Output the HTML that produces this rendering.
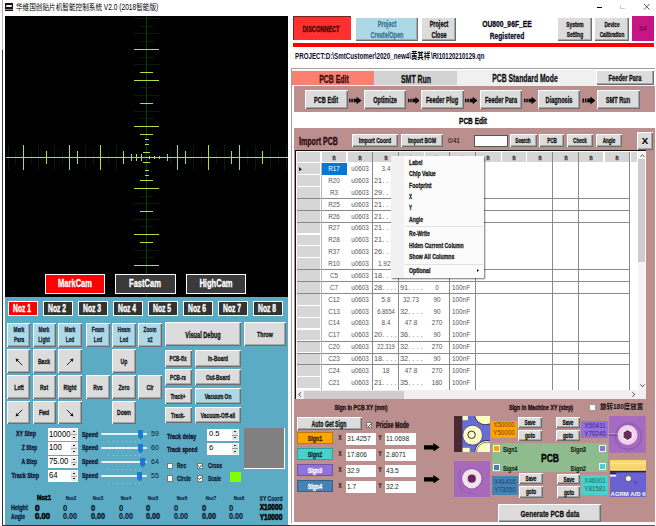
<!DOCTYPE html><html><head><meta charset="utf-8"><title>SMT</title><style>html,body{margin:0;padding:0}body{width:656px;height:526px;position:relative;overflow:hidden;background:#fff;font-family:"Liberation Sans",sans-serif}
.a{position:absolute;display:block}
.t{position:absolute;white-space:nowrap;line-height:1;display:block}
.b3{box-shadow:inset 1px 1px 0 #fff,inset -1px -1px 0 #6e6e6e,inset -2px -2px 0 #a8a8a8}
</style></head><body><div class="a " style="left:2.0px;top:0.0px;width:1.0px;height:50.0px;background:#b4b4bc;"></div>
<div class="a " style="left:2.0px;top:50.0px;width:1.0px;height:476.0px;background:#2c3444;"></div>
<div class="a " style="left:5.0px;top:3.0px;width:8.0px;height:8.0px;background:#111;"></div>
<div class="a " style="left:6.0px;top:5.0px;width:6.0px;height:2.0px;background:#eee;border-radius:2px"></div>
<div class="a " style="left:5.0px;top:9.0px;width:8.0px;height:1.0px;background:linear-gradient(90deg,#888 50%,#c87533 50%);"></div>
<span class="t" style="left:15.5px;top:7.6px;font-size:8.2px;font-weight:400;color:#000;transform:translate(0,-50%) scaleX(0.808);transform-origin:left center;font-family:'Liberation Sans','Noto Sans CJK SC',sans-serif;">华维国创贴片机智能控制系统 V2.0 (2018智能版)</span>
<div class="a " style="left:597.0px;top:7.0px;width:5.0px;height:1.3px;background:#000;"></div>
<div class="a " style="left:620.0px;top:4.5px;width:0.8px;height:4.5px;background:#ccc;"></div>
<div class="a " style="left:620.0px;top:8.4px;width:5.0px;height:0.8px;background:#ccc;"></div>
<svg class="a" style="left:643px;top:3px" width="8" height="8" viewBox="0 0 8 8"><path d="M1 1L6.5 6.5M6.5 1L1 6.5" stroke="#333" stroke-width="0.8" fill="none"/></svg>
<div class="a " style="left:5.0px;top:16.0px;width:282.5px;height:281.0px;background:#000;"></div>
<div class="a " style="left:146.0px;top:16.0px;width:1.0px;height:281.0px;background:#0a400a;"></div>
<div class="a " style="left:134.3px;top:17.9px;width:24.4px;height:1.0px;background:#061e06;"></div>
<div class="a " style="left:140.3px;top:25.7px;width:12.4px;height:1.0px;background:#061e06;"></div>
<div class="a " style="left:134.3px;top:33.4px;width:24.4px;height:1.0px;background:#061e06;"></div>
<div class="a " style="left:140.3px;top:41.1px;width:12.4px;height:1.0px;background:#061e06;"></div>
<div class="a " style="left:134.3px;top:48.8px;width:24.4px;height:1.1px;background:#b0e040;"></div>
<div class="a " style="left:140.3px;top:56.5px;width:12.4px;height:1.0px;background:#061e06;"></div>
<div class="a " style="left:134.3px;top:64.3px;width:24.4px;height:1.0px;background:#061e06;"></div>
<div class="a " style="left:140.3px;top:71.9px;width:12.4px;height:1.1px;background:#b0e040;"></div>
<div class="a " style="left:134.3px;top:79.7px;width:24.4px;height:1.1px;background:#b0e040;"></div>
<div class="a " style="left:140.3px;top:87.4px;width:12.4px;height:1.0px;background:#061e06;"></div>
<div class="a " style="left:134.3px;top:95.1px;width:24.4px;height:1.0px;background:#061e06;"></div>
<div class="a " style="left:140.3px;top:102.8px;width:12.4px;height:1.1px;background:#b0e040;"></div>
<div class="a " style="left:134.3px;top:110.6px;width:24.4px;height:1.0px;background:#061e06;"></div>
<div class="a " style="left:140.3px;top:118.3px;width:12.4px;height:1.0px;background:#061e06;"></div>
<div class="a " style="left:134.3px;top:126.0px;width:24.4px;height:1.1px;background:#b0e040;"></div>
<div class="a " style="left:140.3px;top:133.7px;width:12.4px;height:1.1px;background:#b0e040;"></div>
<div class="a " style="left:140.3px;top:180.0px;width:12.4px;height:1.1px;background:#b0e040;"></div>
<div class="a " style="left:134.3px;top:187.7px;width:24.4px;height:1.1px;background:#b0e040;"></div>
<div class="a " style="left:140.3px;top:195.5px;width:12.4px;height:1.0px;background:#061e06;"></div>
<div class="a " style="left:134.3px;top:203.2px;width:24.4px;height:1.0px;background:#061e06;"></div>
<div class="a " style="left:140.3px;top:210.9px;width:12.4px;height:1.1px;background:#b0e040;"></div>
<div class="a " style="left:134.3px;top:218.7px;width:24.4px;height:1.0px;background:#061e06;"></div>
<div class="a " style="left:140.3px;top:226.4px;width:12.4px;height:1.0px;background:#061e06;"></div>
<div class="a " style="left:134.3px;top:234.1px;width:24.4px;height:1.1px;background:#b0e040;"></div>
<div class="a " style="left:140.3px;top:241.8px;width:12.4px;height:1.1px;background:#b0e040;"></div>
<div class="a " style="left:134.3px;top:249.5px;width:24.4px;height:1.0px;background:#061e06;"></div>
<div class="a " style="left:140.3px;top:257.3px;width:12.4px;height:1.0px;background:#061e06;"></div>
<div class="a " style="left:134.3px;top:264.9px;width:24.4px;height:1.1px;background:#b0e040;"></div>
<div class="a " style="left:143.3px;top:151.8px;width:6.4px;height:1.1px;background:#b0e040;"></div>
<div class="a " style="left:143.3px;top:161.8px;width:6.4px;height:1.1px;background:#b0e040;"></div>
<div class="a " style="left:144.5px;top:143.8px;width:4.0px;height:1.1px;background:#b0e040;"></div>
<div class="a " style="left:144.5px;top:169.8px;width:4.0px;height:1.1px;background:#b0e040;"></div>
<div class="a " style="left:144.5px;top:138.8px;width:4.0px;height:1.1px;background:#b0e040;"></div>
<div class="a " style="left:144.5px;top:174.8px;width:4.0px;height:1.1px;background:#b0e040;"></div>
<div class="a " style="left:7.5px;top:144.9px;width:1.0px;height:25.0px;background:#061e06;"></div>
<div class="a " style="left:15.3px;top:150.9px;width:1.0px;height:13.0px;background:#061e06;"></div>
<div class="a " style="left:22.9px;top:144.9px;width:1.1px;height:25.0px;background:#b0e040;"></div>
<div class="a " style="left:30.7px;top:150.9px;width:1.0px;height:13.0px;background:#061e06;"></div>
<div class="a " style="left:38.4px;top:144.9px;width:1.0px;height:25.0px;background:#061e06;"></div>
<div class="a " style="left:46.1px;top:150.9px;width:1.1px;height:13.0px;background:#b0e040;"></div>
<div class="a " style="left:53.9px;top:144.9px;width:1.0px;height:25.0px;background:#061e06;"></div>
<div class="a " style="left:61.6px;top:150.9px;width:1.0px;height:13.0px;background:#061e06;"></div>
<div class="a " style="left:69.2px;top:144.9px;width:1.1px;height:25.0px;background:#b0e040;"></div>
<div class="a " style="left:77.0px;top:150.9px;width:1.1px;height:13.0px;background:#b0e040;"></div>
<div class="a " style="left:84.7px;top:144.9px;width:1.0px;height:25.0px;background:#061e06;"></div>
<div class="a " style="left:92.5px;top:150.9px;width:1.0px;height:13.0px;background:#061e06;"></div>
<div class="a " style="left:100.1px;top:144.9px;width:1.1px;height:25.0px;background:#b0e040;"></div>
<div class="a " style="left:107.9px;top:150.9px;width:1.0px;height:13.0px;background:#061e06;"></div>
<div class="a " style="left:115.6px;top:144.9px;width:1.0px;height:25.0px;background:#061e06;"></div>
<div class="a " style="left:123.3px;top:150.9px;width:1.1px;height:13.0px;background:#b0e040;"></div>
<div class="a " style="left:169.7px;top:150.9px;width:1.0px;height:13.0px;background:#061e06;"></div>
<div class="a " style="left:177.3px;top:144.9px;width:1.1px;height:25.0px;background:#b0e040;"></div>
<div class="a " style="left:185.0px;top:150.9px;width:1.1px;height:13.0px;background:#b0e040;"></div>
<div class="a " style="left:192.8px;top:144.9px;width:1.0px;height:25.0px;background:#061e06;"></div>
<div class="a " style="left:200.5px;top:150.9px;width:1.0px;height:13.0px;background:#061e06;"></div>
<div class="a " style="left:208.2px;top:144.9px;width:1.1px;height:25.0px;background:#b0e040;"></div>
<div class="a " style="left:216.0px;top:150.9px;width:1.0px;height:13.0px;background:#061e06;"></div>
<div class="a " style="left:223.7px;top:144.9px;width:1.0px;height:25.0px;background:#061e06;"></div>
<div class="a " style="left:231.4px;top:150.9px;width:1.1px;height:13.0px;background:#b0e040;"></div>
<div class="a " style="left:239.1px;top:144.9px;width:1.1px;height:25.0px;background:#b0e040;"></div>
<div class="a " style="left:246.9px;top:150.9px;width:1.0px;height:13.0px;background:#061e06;"></div>
<div class="a " style="left:254.6px;top:144.9px;width:1.0px;height:25.0px;background:#061e06;"></div>
<div class="a " style="left:262.2px;top:150.9px;width:1.1px;height:13.0px;background:#b0e040;"></div>
<div class="a " style="left:270.0px;top:144.9px;width:1.0px;height:25.0px;background:#061e06;"></div>
<div class="a " style="left:277.7px;top:150.9px;width:1.0px;height:13.0px;background:#061e06;"></div>
<div class="a " style="left:285.5px;top:144.9px;width:1.0px;height:25.0px;background:#061e06;"></div>
<div class="a " style="left:6.0px;top:156.8px;width:281.5px;height:1.2px;background:#b0e040;"></div>
<div class="a " style="left:140.9px;top:153.9px;width:1.1px;height:7.0px;background:#b0e040;"></div>
<div class="a " style="left:135.8px;top:154.2px;width:1.1px;height:6.4px;background:#b0e040;"></div>
<div class="a " style="left:130.6px;top:154.2px;width:1.1px;height:6.4px;background:#b0e040;"></div>
<div class="a " style="left:148.9px;top:155.8px;width:1.1px;height:3.2px;background:#b0e040;"></div>
<div class="a " style="left:153.8px;top:155.8px;width:1.1px;height:3.2px;background:#b0e040;"></div>
<div class="a " style="left:158.9px;top:155.8px;width:1.1px;height:3.2px;background:#b0e040;"></div>
<div class="a " style="left:166.9px;top:153.9px;width:1.1px;height:7.0px;background:#b0e040;"></div>
<div class="a " style="left:44.5px;top:273.5px;width:60.5px;height:20.0px;background:#ff0000;border:1px solid #fff;box-sizing:border-box"></div>
<span class="t" style="left:74.8px;top:283.3px;font-size:10.5px;font-weight:700;color:#fff;transform:translate(-50%,-50%) scaleX(0.720);transform-origin:center;-webkit-text-stroke:0.3px;">MarkCam</span>
<div class="a " style="left:115.0px;top:273.5px;width:60.5px;height:20.0px;background:#3a3a3a;border:1px solid #fff;box-sizing:border-box"></div>
<span class="t" style="left:145.2px;top:283.3px;font-size:10.5px;font-weight:700;color:#fff;transform:translate(-50%,-50%) scaleX(0.720);transform-origin:center;-webkit-text-stroke:0.3px;">FastCam</span>
<div class="a " style="left:185.5px;top:273.5px;width:60.5px;height:20.0px;background:#3a3a3a;border:1px solid #fff;box-sizing:border-box"></div>
<span class="t" style="left:215.8px;top:283.3px;font-size:10.5px;font-weight:700;color:#fff;transform:translate(-50%,-50%) scaleX(0.720);transform-origin:center;-webkit-text-stroke:0.3px;">HighCam</span>
<div class="a " style="left:5.0px;top:297.0px;width:282.5px;height:227.6px;background:#5aabc3;"></div>
<div class="a " style="left:2.0px;top:525.0px;width:288.0px;height:1.0px;background:#2a2c3c;"></div>
<div class="a " style="left:290.0px;top:525.0px;width:365.0px;height:1.0px;background:#555;"></div>
<div class="a " style="left:8.0px;top:300.8px;width:30.3px;height:15.5px;background:#ff0000;border:1px solid #fff;box-sizing:border-box"></div>
<span class="t" style="left:22.4px;top:308.6px;font-size:10.2px;font-weight:700;color:#fff;transform:translate(-50%,-50%) scaleX(0.662);transform-origin:center;-webkit-text-stroke:0.4px;">Noz 1</span>
<div class="a " style="left:43.0px;top:300.8px;width:30.3px;height:15.5px;background:#333;border:1px solid #fff;box-sizing:border-box"></div>
<span class="t" style="left:57.4px;top:308.6px;font-size:10.2px;font-weight:700;color:#fff;transform:translate(-50%,-50%) scaleX(0.662);transform-origin:center;-webkit-text-stroke:0.4px;">Noz 2</span>
<div class="a " style="left:78.0px;top:300.8px;width:30.3px;height:15.5px;background:#333;border:1px solid #fff;box-sizing:border-box"></div>
<span class="t" style="left:92.4px;top:308.6px;font-size:10.2px;font-weight:700;color:#fff;transform:translate(-50%,-50%) scaleX(0.662);transform-origin:center;-webkit-text-stroke:0.4px;">Noz 3</span>
<div class="a " style="left:113.0px;top:300.8px;width:30.3px;height:15.5px;background:#333;border:1px solid #fff;box-sizing:border-box"></div>
<span class="t" style="left:127.4px;top:308.6px;font-size:10.2px;font-weight:700;color:#fff;transform:translate(-50%,-50%) scaleX(0.662);transform-origin:center;-webkit-text-stroke:0.4px;">Noz 4</span>
<div class="a " style="left:148.0px;top:300.8px;width:30.3px;height:15.5px;background:#333;border:1px solid #fff;box-sizing:border-box"></div>
<span class="t" style="left:162.4px;top:308.6px;font-size:10.2px;font-weight:700;color:#fff;transform:translate(-50%,-50%) scaleX(0.662);transform-origin:center;-webkit-text-stroke:0.4px;">Noz 5</span>
<div class="a " style="left:183.0px;top:300.8px;width:30.3px;height:15.5px;background:#333;border:1px solid #fff;box-sizing:border-box"></div>
<span class="t" style="left:197.4px;top:308.6px;font-size:10.2px;font-weight:700;color:#fff;transform:translate(-50%,-50%) scaleX(0.662);transform-origin:center;-webkit-text-stroke:0.4px;">Noz 6</span>
<div class="a " style="left:218.0px;top:300.8px;width:30.3px;height:15.5px;background:#333;border:1px solid #fff;box-sizing:border-box"></div>
<span class="t" style="left:232.4px;top:308.6px;font-size:10.2px;font-weight:700;color:#fff;transform:translate(-50%,-50%) scaleX(0.662);transform-origin:center;-webkit-text-stroke:0.4px;">Noz 7</span>
<div class="a " style="left:253.0px;top:300.8px;width:30.3px;height:15.5px;background:#333;border:1px solid #fff;box-sizing:border-box"></div>
<span class="t" style="left:267.4px;top:308.6px;font-size:10.2px;font-weight:700;color:#fff;transform:translate(-50%,-50%) scaleX(0.662);transform-origin:center;-webkit-text-stroke:0.4px;">Noz 8</span>
<div class="a b3" style="left:7.0px;top:322.6px;width:23.2px;height:24.1px;background:#add8e6;"></div>
<span class="t" style="left:18.6px;top:330.1px;font-size:7.6px;font-weight:700;color:#123;transform:translate(-50%,-50%) scaleX(0.620);transform-origin:center;-webkit-text-stroke:0.3px;">Mark</span>
<span class="t" style="left:18.6px;top:340.1px;font-size:7.6px;font-weight:700;color:#123;transform:translate(-50%,-50%) scaleX(0.620);transform-origin:center;-webkit-text-stroke:0.3px;">Para</span>
<div class="a b3" style="left:32.7px;top:322.6px;width:23.1px;height:24.1px;background:#add8e6;"></div>
<span class="t" style="left:44.2px;top:330.1px;font-size:7.6px;font-weight:700;color:#123;transform:translate(-50%,-50%) scaleX(0.620);transform-origin:center;-webkit-text-stroke:0.3px;">Mark</span>
<span class="t" style="left:44.2px;top:340.1px;font-size:7.6px;font-weight:700;color:#123;transform:translate(-50%,-50%) scaleX(0.620);transform-origin:center;-webkit-text-stroke:0.3px;">Light</span>
<div class="a b3" style="left:58.3px;top:322.6px;width:23.4px;height:24.1px;background:#add8e6;"></div>
<span class="t" style="left:70.0px;top:330.1px;font-size:7.6px;font-weight:700;color:#123;transform:translate(-50%,-50%) scaleX(0.620);transform-origin:center;-webkit-text-stroke:0.3px;">Mark</span>
<span class="t" style="left:70.0px;top:340.1px;font-size:7.6px;font-weight:700;color:#123;transform:translate(-50%,-50%) scaleX(0.620);transform-origin:center;-webkit-text-stroke:0.3px;">Led</span>
<div class="a b3" style="left:85.7px;top:322.6px;width:24.0px;height:24.1px;background:#add8e6;"></div>
<span class="t" style="left:97.7px;top:330.1px;font-size:7.6px;font-weight:700;color:#123;transform:translate(-50%,-50%) scaleX(0.620);transform-origin:center;-webkit-text-stroke:0.3px;">Feam</span>
<span class="t" style="left:97.7px;top:340.1px;font-size:7.6px;font-weight:700;color:#123;transform:translate(-50%,-50%) scaleX(0.620);transform-origin:center;-webkit-text-stroke:0.3px;">Led</span>
<div class="a b3" style="left:112.4px;top:322.6px;width:23.4px;height:24.1px;background:#add8e6;"></div>
<span class="t" style="left:124.1px;top:330.1px;font-size:7.6px;font-weight:700;color:#123;transform:translate(-50%,-50%) scaleX(0.620);transform-origin:center;-webkit-text-stroke:0.3px;">Heam</span>
<span class="t" style="left:124.1px;top:340.1px;font-size:7.6px;font-weight:700;color:#123;transform:translate(-50%,-50%) scaleX(0.620);transform-origin:center;-webkit-text-stroke:0.3px;">Led</span>
<div class="a b3" style="left:138.4px;top:322.6px;width:23.2px;height:24.1px;background:#add8e6;"></div>
<span class="t" style="left:150.0px;top:330.1px;font-size:7.6px;font-weight:700;color:#123;transform:translate(-50%,-50%) scaleX(0.620);transform-origin:center;-webkit-text-stroke:0.3px;">Zoom</span>
<span class="t" style="left:150.0px;top:340.1px;font-size:7.6px;font-weight:700;color:#123;transform:translate(-50%,-50%) scaleX(0.620);transform-origin:center;-webkit-text-stroke:0.3px;">x2</span>
<div class="a b3" style="left:164.7px;top:322.4px;width:76.6px;height:23.9px;background:#dcdcdc;"></div>
<span class="t" style="left:203.0px;top:334.9px;font-size:8.5px;font-weight:700;color:#111;transform:translate(-50%,-50%) scaleX(0.660);transform-origin:center;-webkit-text-stroke:0.3px;">Visual Debug</span>
<div class="a b3" style="left:244.2px;top:322.4px;width:42.2px;height:23.9px;background:#dcdcdc;"></div>
<span class="t" style="left:265.3px;top:334.9px;font-size:8px;font-weight:700;color:#111;transform:translate(-50%,-50%) scaleX(0.660);transform-origin:center;-webkit-text-stroke:0.3px;">Throw</span>
<div class="a b3" style="left:7.0px;top:349.4px;width:23.2px;height:23.4px;background:#dcdcdc;"></div>
<svg class="a" style="left:14.6px;top:357.7px" width="8" height="8" viewBox="0 0 8 8"><g transform="rotate(0 4 4)"><path d="M7.2 7.2L1.6 1.6" stroke="#111" stroke-width="0.9" fill="none"/><path d="M0.6 0.6L4 1.4L1.4 4Z" fill="#111"/></g></svg>
<div class="a b3" style="left:32.7px;top:349.4px;width:23.1px;height:23.4px;background:#dcdcdc;"></div>
<span class="t" style="left:44.2px;top:361.6px;font-size:8px;font-weight:700;color:#111;transform:translate(-50%,-50%) scaleX(0.640);transform-origin:center;-webkit-text-stroke:0.3px;">Back</span>
<div class="a b3" style="left:58.3px;top:349.4px;width:23.4px;height:23.4px;background:#dcdcdc;"></div>
<svg class="a" style="left:66.0px;top:357.7px" width="8" height="8" viewBox="0 0 8 8"><g transform="rotate(90 4 4)"><path d="M7.2 7.2L1.6 1.6" stroke="#111" stroke-width="0.9" fill="none"/><path d="M0.6 0.6L4 1.4L1.4 4Z" fill="#111"/></g></svg>
<div class="a b3" style="left:112.4px;top:349.4px;width:23.4px;height:23.4px;background:#dcdcdc;"></div>
<span class="t" style="left:124.1px;top:361.6px;font-size:8px;font-weight:700;color:#111;transform:translate(-50%,-50%) scaleX(0.640);transform-origin:center;-webkit-text-stroke:0.3px;">Up</span>
<div class="a b3" style="left:7.0px;top:375.2px;width:23.2px;height:23.6px;background:#dcdcdc;"></div>
<span class="t" style="left:18.6px;top:387.5px;font-size:8px;font-weight:700;color:#111;transform:translate(-50%,-50%) scaleX(0.640);transform-origin:center;-webkit-text-stroke:0.3px;">Left</span>
<div class="a b3" style="left:32.7px;top:375.2px;width:23.1px;height:23.6px;background:#dcdcdc;"></div>
<span class="t" style="left:44.2px;top:387.5px;font-size:8px;font-weight:700;color:#111;transform:translate(-50%,-50%) scaleX(0.640);transform-origin:center;-webkit-text-stroke:0.3px;">Rst</span>
<div class="a b3" style="left:58.3px;top:375.2px;width:23.4px;height:23.6px;background:#dcdcdc;"></div>
<span class="t" style="left:70.0px;top:387.5px;font-size:8px;font-weight:700;color:#111;transform:translate(-50%,-50%) scaleX(0.640);transform-origin:center;-webkit-text-stroke:0.3px;">Right</span>
<div class="a b3" style="left:85.7px;top:375.2px;width:24.0px;height:23.6px;background:#dcdcdc;"></div>
<span class="t" style="left:97.7px;top:387.5px;font-size:8px;font-weight:700;color:#111;transform:translate(-50%,-50%) scaleX(0.640);transform-origin:center;-webkit-text-stroke:0.3px;">Rvs</span>
<div class="a b3" style="left:112.4px;top:375.2px;width:23.4px;height:23.6px;background:#dcdcdc;"></div>
<span class="t" style="left:124.1px;top:387.5px;font-size:8px;font-weight:700;color:#111;transform:translate(-50%,-50%) scaleX(0.640);transform-origin:center;-webkit-text-stroke:0.3px;">Zero</span>
<div class="a b3" style="left:138.4px;top:375.2px;width:23.2px;height:23.6px;background:#dcdcdc;"></div>
<span class="t" style="left:150.0px;top:387.5px;font-size:8px;font-weight:700;color:#111;transform:translate(-50%,-50%) scaleX(0.640);transform-origin:center;-webkit-text-stroke:0.3px;">Clr</span>
<div class="a b3" style="left:7.0px;top:401.3px;width:23.2px;height:23.0px;background:#dcdcdc;"></div>
<svg class="a" style="left:14.6px;top:409.4px" width="8" height="8" viewBox="0 0 8 8"><g transform="rotate(270 4 4)"><path d="M7.2 7.2L1.6 1.6" stroke="#111" stroke-width="0.9" fill="none"/><path d="M0.6 0.6L4 1.4L1.4 4Z" fill="#111"/></g></svg>
<div class="a b3" style="left:32.7px;top:401.3px;width:23.1px;height:23.0px;background:#dcdcdc;"></div>
<span class="t" style="left:44.2px;top:413.3px;font-size:8px;font-weight:700;color:#111;transform:translate(-50%,-50%) scaleX(0.640);transform-origin:center;-webkit-text-stroke:0.3px;">Fwd</span>
<div class="a b3" style="left:58.3px;top:401.3px;width:23.4px;height:23.0px;background:#dcdcdc;"></div>
<svg class="a" style="left:66.0px;top:409.4px" width="8" height="8" viewBox="0 0 8 8"><g transform="rotate(180 4 4)"><path d="M7.2 7.2L1.6 1.6" stroke="#111" stroke-width="0.9" fill="none"/><path d="M0.6 0.6L4 1.4L1.4 4Z" fill="#111"/></g></svg>
<div class="a b3" style="left:112.4px;top:401.3px;width:23.4px;height:23.0px;background:#dcdcdc;"></div>
<span class="t" style="left:124.1px;top:413.3px;font-size:8px;font-weight:700;color:#111;transform:translate(-50%,-50%) scaleX(0.640);transform-origin:center;-webkit-text-stroke:0.3px;">Down</span>
<div class="a b3" style="left:164.7px;top:350.0px;width:27.2px;height:16.5px;background:#dcdcdc;"></div>
<span class="t" style="left:178.3px;top:358.8px;font-size:7.6px;font-weight:700;color:#111;transform:translate(-50%,-50%) scaleX(0.620);transform-origin:center;-webkit-text-stroke:0.3px;">PCB-fix</span>
<div class="a b3" style="left:194.7px;top:350.0px;width:46.6px;height:16.5px;background:#dcdcdc;"></div>
<span class="t" style="left:218.0px;top:358.8px;font-size:7.6px;font-weight:700;color:#111;transform:translate(-50%,-50%) scaleX(0.640);transform-origin:center;-webkit-text-stroke:0.3px;">In-Board</span>
<div class="a b3" style="left:164.7px;top:369.4px;width:27.2px;height:16.1px;background:#dcdcdc;"></div>
<span class="t" style="left:178.3px;top:377.9px;font-size:7.6px;font-weight:700;color:#111;transform:translate(-50%,-50%) scaleX(0.620);transform-origin:center;-webkit-text-stroke:0.3px;">PCB-rs</span>
<div class="a b3" style="left:194.7px;top:369.4px;width:46.6px;height:16.1px;background:#dcdcdc;"></div>
<span class="t" style="left:218.0px;top:377.9px;font-size:7.6px;font-weight:700;color:#111;transform:translate(-50%,-50%) scaleX(0.640);transform-origin:center;-webkit-text-stroke:0.3px;">Out-Board</span>
<div class="a b3" style="left:164.7px;top:388.4px;width:27.2px;height:16.0px;background:#dcdcdc;"></div>
<span class="t" style="left:178.3px;top:396.9px;font-size:7.6px;font-weight:700;color:#111;transform:translate(-50%,-50%) scaleX(0.620);transform-origin:center;-webkit-text-stroke:0.3px;">Track+</span>
<div class="a b3" style="left:194.7px;top:388.4px;width:46.6px;height:16.0px;background:#add8e6;"></div>
<span class="t" style="left:218.0px;top:396.9px;font-size:7.6px;font-weight:700;color:#111;transform:translate(-50%,-50%) scaleX(0.640);transform-origin:center;-webkit-text-stroke:0.3px;">Vacuum On</span>
<div class="a b3" style="left:164.7px;top:407.3px;width:27.2px;height:16.2px;background:#dcdcdc;"></div>
<span class="t" style="left:178.3px;top:415.9px;font-size:7.6px;font-weight:700;color:#111;transform:translate(-50%,-50%) scaleX(0.620);transform-origin:center;-webkit-text-stroke:0.3px;">Track-</span>
<div class="a b3" style="left:194.7px;top:407.3px;width:46.6px;height:16.2px;background:#dcdcdc;"></div>
<span class="t" style="left:218.0px;top:415.9px;font-size:7.6px;font-weight:700;color:#111;transform:translate(-50%,-50%) scaleX(0.640);transform-origin:center;-webkit-text-stroke:0.3px;">Vacuum-Off-all</span>
<span class="t" style="left:36.1px;top:434.2px;font-size:7.9px;font-weight:700;color:#101030;transform:translate(-100%,-50%) scaleX(0.677);transform-origin:right center;-webkit-text-stroke:0.3px;">XY Step</span>
<div class="a " style="left:47.6px;top:428.3px;width:30.1px;height:12.5px;background:#fff;"></div>
<div class="a " style="left:70.6px;top:429.3px;width:6.3px;height:10.5px;background:#e8e8e8;"></div>
<div class="a " style="left:70.6px;top:434.2px;width:6.3px;height:0.6px;background:#aaa;"></div>
<div class="a " style="left:72.8px;top:431.2px;width:2.0px;height:1.0px;background:#222;"></div>
<div class="a " style="left:72.8px;top:436.9px;width:2.0px;height:1.0px;background:#222;"></div>
<span class="t" style="left:49.1px;top:433.7px;font-size:8.6px;font-weight:400;color:#000;transform:translate(0,-50%) scaleX(0.900);transform-origin:left center;">10000</span>
<span class="t" style="left:81.6px;top:434.6px;font-size:7.9px;font-weight:700;color:#101030;transform:translate(0,-50%) scaleX(0.675);transform-origin:left center;-webkit-text-stroke:0.3px;">Speed</span>
<div class="a " style="left:101.0px;top:433.3px;width:46.0px;height:1.8px;background:#e8eef2;border-radius:1px"></div>
<div class="a " style="left:108.4px;top:440.8px;width:0.8px;height:1.2px;background:#9fd0e0;"></div>
<div class="a " style="left:112.8px;top:440.8px;width:0.8px;height:1.2px;background:#9fd0e0;"></div>
<div class="a " style="left:117.2px;top:440.8px;width:0.8px;height:1.2px;background:#9fd0e0;"></div>
<div class="a " style="left:121.6px;top:440.8px;width:0.8px;height:1.2px;background:#9fd0e0;"></div>
<div class="a " style="left:126.0px;top:440.8px;width:0.8px;height:1.2px;background:#9fd0e0;"></div>
<div class="a " style="left:130.4px;top:440.8px;width:0.8px;height:1.2px;background:#9fd0e0;"></div>
<div class="a " style="left:134.8px;top:440.8px;width:0.8px;height:1.2px;background:#9fd0e0;"></div>
<div class="a " style="left:139.2px;top:440.8px;width:0.8px;height:1.2px;background:#9fd0e0;"></div>
<svg class="a" style="left:137.9px;top:430.0px" width="5.4" height="9.8" viewBox="0 0 5.4 10"><path d="M0 0H5.4V6.8L2.7 10L0 6.8Z" fill="#1a7ad4"/></svg>
<span class="t" style="left:151.4px;top:434.0px;font-size:7.8px;font-weight:400;color:#0a1a3a;transform:translate(0,-50%) scaleX(0.899);transform-origin:left center;">59</span>
<span class="t" style="left:37.3px;top:447.9px;font-size:7.9px;font-weight:700;color:#101030;transform:translate(-100%,-50%) scaleX(0.630);transform-origin:right center;-webkit-text-stroke:0.3px;">Z Step</span>
<div class="a " style="left:47.6px;top:442.0px;width:30.1px;height:12.5px;background:#fff;"></div>
<div class="a " style="left:70.6px;top:443.0px;width:6.3px;height:10.5px;background:#e8e8e8;"></div>
<div class="a " style="left:70.6px;top:447.9px;width:6.3px;height:0.6px;background:#aaa;"></div>
<div class="a " style="left:72.8px;top:444.9px;width:2.0px;height:1.0px;background:#222;"></div>
<div class="a " style="left:72.8px;top:450.6px;width:2.0px;height:1.0px;background:#222;"></div>
<span class="t" style="left:49.1px;top:447.4px;font-size:8.6px;font-weight:400;color:#000;transform:translate(0,-50%) scaleX(0.900);transform-origin:left center;">100</span>
<span class="t" style="left:81.6px;top:448.3px;font-size:7.9px;font-weight:700;color:#101030;transform:translate(0,-50%) scaleX(0.675);transform-origin:left center;-webkit-text-stroke:0.3px;">Speed</span>
<div class="a " style="left:101.0px;top:447.0px;width:46.0px;height:1.8px;background:#e8eef2;border-radius:1px"></div>
<div class="a " style="left:108.4px;top:454.5px;width:0.8px;height:1.2px;background:#9fd0e0;"></div>
<div class="a " style="left:112.8px;top:454.5px;width:0.8px;height:1.2px;background:#9fd0e0;"></div>
<div class="a " style="left:117.2px;top:454.5px;width:0.8px;height:1.2px;background:#9fd0e0;"></div>
<div class="a " style="left:121.6px;top:454.5px;width:0.8px;height:1.2px;background:#9fd0e0;"></div>
<div class="a " style="left:126.0px;top:454.5px;width:0.8px;height:1.2px;background:#9fd0e0;"></div>
<div class="a " style="left:130.4px;top:454.5px;width:0.8px;height:1.2px;background:#9fd0e0;"></div>
<div class="a " style="left:134.8px;top:454.5px;width:0.8px;height:1.2px;background:#9fd0e0;"></div>
<div class="a " style="left:139.2px;top:454.5px;width:0.8px;height:1.2px;background:#9fd0e0;"></div>
<svg class="a" style="left:137.9px;top:443.7px" width="5.4" height="9.8" viewBox="0 0 5.4 10"><path d="M0 0H5.4V6.8L2.7 10L0 6.8Z" fill="#1a7ad4"/></svg>
<span class="t" style="left:151.4px;top:447.7px;font-size:7.8px;font-weight:400;color:#0a1a3a;transform:translate(0,-50%) scaleX(0.899);transform-origin:left center;">60</span>
<span class="t" style="left:36.6px;top:461.7px;font-size:7.9px;font-weight:700;color:#101030;transform:translate(-100%,-50%) scaleX(0.631);transform-origin:right center;-webkit-text-stroke:0.3px;">A Step</span>
<div class="a " style="left:47.6px;top:455.8px;width:30.1px;height:12.5px;background:#fff;"></div>
<div class="a " style="left:70.6px;top:456.8px;width:6.3px;height:10.5px;background:#e8e8e8;"></div>
<div class="a " style="left:70.6px;top:461.7px;width:6.3px;height:0.6px;background:#aaa;"></div>
<div class="a " style="left:72.8px;top:458.7px;width:2.0px;height:1.0px;background:#222;"></div>
<div class="a " style="left:72.8px;top:464.4px;width:2.0px;height:1.0px;background:#222;"></div>
<span class="t" style="left:49.1px;top:461.2px;font-size:8.6px;font-weight:400;color:#000;transform:translate(0,-50%) scaleX(0.900);transform-origin:left center;">75.00</span>
<span class="t" style="left:81.6px;top:462.1px;font-size:7.9px;font-weight:700;color:#101030;transform:translate(0,-50%) scaleX(0.675);transform-origin:left center;-webkit-text-stroke:0.3px;">Speed</span>
<div class="a " style="left:101.0px;top:461.2px;width:46.0px;height:1.8px;background:#e8eef2;border-radius:1px"></div>
<div class="a " style="left:108.4px;top:468.7px;width:0.8px;height:1.2px;background:#9fd0e0;"></div>
<div class="a " style="left:112.8px;top:468.7px;width:0.8px;height:1.2px;background:#9fd0e0;"></div>
<div class="a " style="left:117.2px;top:468.7px;width:0.8px;height:1.2px;background:#9fd0e0;"></div>
<div class="a " style="left:121.6px;top:468.7px;width:0.8px;height:1.2px;background:#9fd0e0;"></div>
<div class="a " style="left:126.0px;top:468.7px;width:0.8px;height:1.2px;background:#9fd0e0;"></div>
<div class="a " style="left:130.4px;top:468.7px;width:0.8px;height:1.2px;background:#9fd0e0;"></div>
<div class="a " style="left:134.8px;top:468.7px;width:0.8px;height:1.2px;background:#9fd0e0;"></div>
<div class="a " style="left:139.2px;top:468.7px;width:0.8px;height:1.2px;background:#9fd0e0;"></div>
<svg class="a" style="left:140.4px;top:457.9px" width="5.4" height="9.8" viewBox="0 0 5.4 10"><path d="M0 0H5.4V6.8L2.7 10L0 6.8Z" fill="#1a7ad4"/></svg>
<span class="t" style="left:151.4px;top:461.9px;font-size:7.8px;font-weight:400;color:#0a1a3a;transform:translate(0,-50%) scaleX(0.899);transform-origin:left center;">64</span>
<span class="t" style="left:38.9px;top:475.7px;font-size:7.9px;font-weight:700;color:#101030;transform:translate(-100%,-50%) scaleX(0.688);transform-origin:right center;-webkit-text-stroke:0.3px;">Track Step</span>
<div class="a " style="left:47.6px;top:469.8px;width:30.1px;height:12.5px;background:#fff;"></div>
<div class="a " style="left:70.6px;top:470.8px;width:6.3px;height:10.5px;background:#e8e8e8;"></div>
<div class="a " style="left:70.6px;top:475.7px;width:6.3px;height:0.6px;background:#aaa;"></div>
<div class="a " style="left:72.8px;top:472.7px;width:2.0px;height:1.0px;background:#222;"></div>
<div class="a " style="left:72.8px;top:478.4px;width:2.0px;height:1.0px;background:#222;"></div>
<span class="t" style="left:49.1px;top:475.2px;font-size:8.6px;font-weight:400;color:#000;transform:translate(0,-50%) scaleX(0.900);transform-origin:left center;">64</span>
<span class="t" style="left:81.6px;top:476.1px;font-size:7.9px;font-weight:700;color:#101030;transform:translate(0,-50%) scaleX(0.675);transform-origin:left center;-webkit-text-stroke:0.3px;">Speed</span>
<div class="a " style="left:101.0px;top:475.2px;width:46.0px;height:1.8px;background:#e8eef2;border-radius:1px"></div>
<div class="a " style="left:108.4px;top:482.7px;width:0.8px;height:1.2px;background:#9fd0e0;"></div>
<div class="a " style="left:112.8px;top:482.7px;width:0.8px;height:1.2px;background:#9fd0e0;"></div>
<div class="a " style="left:117.2px;top:482.7px;width:0.8px;height:1.2px;background:#9fd0e0;"></div>
<div class="a " style="left:121.6px;top:482.7px;width:0.8px;height:1.2px;background:#9fd0e0;"></div>
<div class="a " style="left:126.0px;top:482.7px;width:0.8px;height:1.2px;background:#9fd0e0;"></div>
<div class="a " style="left:130.4px;top:482.7px;width:0.8px;height:1.2px;background:#9fd0e0;"></div>
<div class="a " style="left:134.8px;top:482.7px;width:0.8px;height:1.2px;background:#9fd0e0;"></div>
<div class="a " style="left:139.2px;top:482.7px;width:0.8px;height:1.2px;background:#9fd0e0;"></div>
<svg class="a" style="left:136.9px;top:471.9px" width="5.4" height="9.8" viewBox="0 0 5.4 10"><path d="M0 0H5.4V6.8L2.7 10L0 6.8Z" fill="#1a7ad4"/></svg>
<span class="t" style="left:151.4px;top:475.9px;font-size:7.8px;font-weight:400;color:#0a1a3a;transform:translate(0,-50%) scaleX(0.899);transform-origin:left center;">55</span>
<span class="t" style="left:167.3px;top:437.2px;font-size:7.9px;font-weight:700;color:#101030;transform:translate(0,-50%) scaleX(0.683);transform-origin:left center;-webkit-text-stroke:0.3px;">Track delay</span>
<span class="t" style="left:167.3px;top:449.6px;font-size:7.9px;font-weight:700;color:#101030;transform:translate(0,-50%) scaleX(0.666);transform-origin:left center;-webkit-text-stroke:0.3px;">Track speed</span>
<div class="a " style="left:206.8px;top:428.8px;width:31.9px;height:12.0px;background:#fff;"></div>
<div class="a " style="left:231.5px;top:429.8px;width:6.2px;height:10.0px;background:#e4e4e4;"></div>
<div class="a " style="left:231.5px;top:434.5px;width:6.2px;height:0.6px;background:#999;"></div>
<div class="a " style="left:233.5px;top:431.4px;width:2.0px;height:1.0px;background:#333;"></div>
<div class="a " style="left:233.5px;top:437.2px;width:2.0px;height:1.0px;background:#333;"></div>
<span class="t" style="left:208.5px;top:433.8px;font-size:8px;font-weight:400;color:#000;transform:translate(0,-50%) scaleX(0.950);transform-origin:left center;">0.5</span>
<div class="a " style="left:206.8px;top:442.7px;width:31.9px;height:12.0px;background:#fff;"></div>
<div class="a " style="left:231.5px;top:443.7px;width:6.2px;height:10.0px;background:#e4e4e4;"></div>
<div class="a " style="left:231.5px;top:448.4px;width:6.2px;height:0.6px;background:#999;"></div>
<div class="a " style="left:233.5px;top:445.3px;width:2.0px;height:1.0px;background:#333;"></div>
<div class="a " style="left:233.5px;top:451.1px;width:2.0px;height:1.0px;background:#333;"></div>
<span class="t" style="left:208.5px;top:447.7px;font-size:8px;font-weight:400;color:#000;transform:translate(0,-50%) scaleX(0.950);transform-origin:left center;">6</span>
<div class="a " style="left:244.2px;top:428.3px;width:40.4px;height:40.3px;background:#808080;border-right:1px solid #fff;border-bottom:1px solid #fff;box-sizing:border-box"></div>
<div class="a " style="left:167.3px;top:462.6px;width:6.2px;height:6.2px;background:#fff;border:0.6px solid #777;box-sizing:border-box"></div>
<span class="t" style="left:176.6px;top:465.9px;font-size:7.8px;font-weight:700;color:#123;transform:translate(0,-50%) scaleX(0.640);transform-origin:left center;-webkit-text-stroke:0.3px;">Rec</span>
<div class="a " style="left:197.2px;top:462.6px;width:6.2px;height:6.2px;background:#fff;border:0.6px solid #777;box-sizing:border-box"></div>
<svg class="a" style="left:197.2px;top:462.6px" width="6.2" height="6.2" viewBox="0 0 6 6"><path d="M1.2 3L2.5 4.4L4.9 1.5" stroke="#222" stroke-width="0.8" fill="none"/></svg>
<span class="t" style="left:207.5px;top:465.9px;font-size:7.8px;font-weight:700;color:#123;transform:translate(0,-50%) scaleX(0.640);transform-origin:left center;-webkit-text-stroke:0.3px;">Cross</span>
<div class="a " style="left:167.3px;top:475.4px;width:6.2px;height:6.2px;background:#fff;border:0.6px solid #777;box-sizing:border-box"></div>
<span class="t" style="left:176.6px;top:478.7px;font-size:7.8px;font-weight:700;color:#123;transform:translate(0,-50%) scaleX(0.640);transform-origin:left center;-webkit-text-stroke:0.3px;">Circle</span>
<div class="a " style="left:197.2px;top:475.4px;width:6.2px;height:6.2px;background:#fff;border:0.6px solid #777;box-sizing:border-box"></div>
<svg class="a" style="left:197.2px;top:475.4px" width="6.2" height="6.2" viewBox="0 0 6 6"><path d="M1.2 3L2.5 4.4L4.9 1.5" stroke="#222" stroke-width="0.8" fill="none"/></svg>
<span class="t" style="left:207.5px;top:478.7px;font-size:7.8px;font-weight:700;color:#123;transform:translate(0,-50%) scaleX(0.640);transform-origin:left center;-webkit-text-stroke:0.3px;">Scale</span>
<div class="a " style="left:229.8px;top:471.9px;width:11.4px;height:10.3px;background:#7fff00;"></div>
<span class="t" style="left:44.4px;top:498.3px;font-size:7.8px;font-weight:700;color:#000;transform:translate(-50%,-50%) scaleX(0.762);transform-origin:center;-webkit-text-stroke:0.5px;">Noz1</span>
<span class="t" style="left:35.4px;top:507.8px;font-size:8.6px;font-weight:700;color:#000;transform:translate(0,-50%) scaleX(0.962);transform-origin:left center;-webkit-text-stroke:0.5px;">0</span>
<span class="t" style="left:35.4px;top:516.4px;font-size:8.6px;font-weight:700;color:#000;transform:translate(0,-50%) scaleX(0.890);transform-origin:left center;-webkit-text-stroke:0.5px;">0.00</span>
<span class="t" style="left:71.2px;top:497.8px;font-size:6.2px;font-weight:700;color:#0a1a3a;transform:translate(-50%,-50%) scaleX(0.722);transform-origin:center;-webkit-text-stroke:0.1px;">Noz2</span>
<span class="t" style="left:63.1px;top:507.8px;font-size:8.4px;font-weight:700;color:#0a1230;transform:translate(0,-50%) scaleX(0.899);transform-origin:left center;-webkit-text-stroke:0.05px;">0</span>
<span class="t" style="left:63.1px;top:516.4px;font-size:8.4px;font-weight:700;color:#0a1230;transform:translate(0,-50%) scaleX(0.856);transform-origin:left center;-webkit-text-stroke:0.05px;">0.00</span>
<span class="t" style="left:98.3px;top:497.8px;font-size:6.2px;font-weight:700;color:#0a1a3a;transform:translate(-50%,-50%) scaleX(0.722);transform-origin:center;-webkit-text-stroke:0.1px;">Noz3</span>
<span class="t" style="left:90.8px;top:507.8px;font-size:8.4px;font-weight:700;color:#0a1230;transform:translate(0,-50%) scaleX(0.899);transform-origin:left center;-webkit-text-stroke:0.3px;">0</span>
<span class="t" style="left:90.8px;top:516.4px;font-size:8.4px;font-weight:700;color:#0a1230;transform:translate(0,-50%) scaleX(0.856);transform-origin:left center;-webkit-text-stroke:0.3px;">0.00</span>
<span class="t" style="left:125.9px;top:497.8px;font-size:6.2px;font-weight:700;color:#0a1a3a;transform:translate(-50%,-50%) scaleX(0.722);transform-origin:center;-webkit-text-stroke:0.1px;">Noz4</span>
<span class="t" style="left:118.5px;top:507.8px;font-size:8.4px;font-weight:700;color:#0a1230;transform:translate(0,-50%) scaleX(0.899);transform-origin:left center;-webkit-text-stroke:0.05px;">0</span>
<span class="t" style="left:118.5px;top:516.4px;font-size:8.4px;font-weight:700;color:#0a1230;transform:translate(0,-50%) scaleX(0.856);transform-origin:left center;-webkit-text-stroke:0.05px;">0.00</span>
<span class="t" style="left:152.9px;top:497.8px;font-size:6.2px;font-weight:700;color:#0a1a3a;transform:translate(-50%,-50%) scaleX(0.722);transform-origin:center;-webkit-text-stroke:0.1px;">Noz5</span>
<span class="t" style="left:146.2px;top:507.8px;font-size:8.4px;font-weight:700;color:#0a1230;transform:translate(0,-50%) scaleX(0.899);transform-origin:left center;-webkit-text-stroke:0.3px;">0</span>
<span class="t" style="left:146.2px;top:516.4px;font-size:8.4px;font-weight:700;color:#0a1230;transform:translate(0,-50%) scaleX(0.856);transform-origin:left center;-webkit-text-stroke:0.3px;">0.00</span>
<span class="t" style="left:182.4px;top:497.8px;font-size:6.2px;font-weight:700;color:#0a1a3a;transform:translate(-50%,-50%) scaleX(0.722);transform-origin:center;-webkit-text-stroke:0.1px;">Noz6</span>
<span class="t" style="left:173.9px;top:507.8px;font-size:8.4px;font-weight:700;color:#0a1230;transform:translate(0,-50%) scaleX(0.899);transform-origin:left center;-webkit-text-stroke:0.05px;">0</span>
<span class="t" style="left:173.9px;top:516.4px;font-size:8.4px;font-weight:700;color:#0a1230;transform:translate(0,-50%) scaleX(0.856);transform-origin:left center;-webkit-text-stroke:0.05px;">0.00</span>
<span class="t" style="left:210.7px;top:497.8px;font-size:6.2px;font-weight:700;color:#0a1a3a;transform:translate(-50%,-50%) scaleX(0.722);transform-origin:center;-webkit-text-stroke:0.1px;">Noz7</span>
<span class="t" style="left:201.6px;top:507.8px;font-size:8.4px;font-weight:700;color:#0a1230;transform:translate(0,-50%) scaleX(0.899);transform-origin:left center;-webkit-text-stroke:0.3px;">0</span>
<span class="t" style="left:201.6px;top:516.4px;font-size:8.4px;font-weight:700;color:#0a1230;transform:translate(0,-50%) scaleX(0.856);transform-origin:left center;-webkit-text-stroke:0.3px;">0.00</span>
<span class="t" style="left:238.7px;top:497.8px;font-size:6.2px;font-weight:700;color:#0a1a3a;transform:translate(-50%,-50%) scaleX(0.722);transform-origin:center;-webkit-text-stroke:0.1px;">Noz8</span>
<span class="t" style="left:229.3px;top:507.8px;font-size:8.4px;font-weight:700;color:#0a1230;transform:translate(0,-50%) scaleX(0.899);transform-origin:left center;-webkit-text-stroke:0.05px;">0</span>
<span class="t" style="left:229.3px;top:516.4px;font-size:8.4px;font-weight:700;color:#0a1230;transform:translate(0,-50%) scaleX(0.856);transform-origin:left center;-webkit-text-stroke:0.05px;">0.00</span>
<span class="t" style="left:10.5px;top:507.8px;font-size:7.6px;font-weight:700;color:#0a1a3a;transform:translate(0,-50%) scaleX(0.706);transform-origin:left center;-webkit-text-stroke:0.3px;">Height</span>
<span class="t" style="left:10.8px;top:516.6px;font-size:7.6px;font-weight:700;color:#0a1a3a;transform:translate(0,-50%) scaleX(0.663);transform-origin:left center;-webkit-text-stroke:0.3px;">Angle</span>
<span class="t" style="left:271.3px;top:498.4px;font-size:7px;font-weight:700;color:#0a1a3a;transform:translate(-50%,-50%) scaleX(0.724);transform-origin:center;-webkit-text-stroke:0.15px;">XY Coord</span>
<span class="t" style="left:271.3px;top:508.2px;font-size:8.2px;font-weight:700;color:#000;transform:translate(-50%,-50%) scaleX(0.799);transform-origin:center;-webkit-text-stroke:0.5px;">X10000</span>
<span class="t" style="left:271.3px;top:518.3px;font-size:8.2px;font-weight:700;color:#000;transform:translate(-50%,-50%) scaleX(0.799);transform-origin:center;-webkit-text-stroke:0.5px;">Y10000</span>
<div class="a " style="left:293.0px;top:16.2px;width:58.3px;height:24.1px;background:#ff3030;border-left:1px solid #722;border-top:1px solid #722;box-sizing:border-box"></div>
<span class="t" style="left:321.3px;top:29.0px;font-size:8.4px;font-weight:700;color:#500000;transform:translate(-50%,-50%) scaleX(0.666);transform-origin:center;-webkit-text-stroke:0.3px;">DISCONNECT</span>
<div class="a b3" style="left:355.4px;top:16.9px;width:63.0px;height:24.3px;background:#add8e6;"></div>
<span class="t" style="left:386.9px;top:24.2px;font-size:8.4px;font-weight:700;color:#3a7896;transform:translate(-50%,-50%) scaleX(0.660);transform-origin:center;-webkit-text-stroke:0.3px;">Project</span>
<span class="t" style="left:386.9px;top:34.9px;font-size:8.4px;font-weight:700;color:#3a7896;transform:translate(-50%,-50%) scaleX(0.660);transform-origin:center;-webkit-text-stroke:0.3px;">Create/Open</span>
<div class="a b3" style="left:421.4px;top:16.9px;width:34.2px;height:24.3px;background:#dcdcdc;"></div>
<span class="t" style="left:438.5px;top:24.2px;font-size:8.4px;font-weight:700;color:#111;transform:translate(-50%,-50%) scaleX(0.660);transform-origin:center;-webkit-text-stroke:0.3px;">Project</span>
<span class="t" style="left:438.5px;top:34.9px;font-size:8.4px;font-weight:700;color:#111;transform:translate(-50%,-50%) scaleX(0.660);transform-origin:center;-webkit-text-stroke:0.3px;">Close</span>
<span class="t" style="left:506.5px;top:23.9px;font-size:9px;font-weight:700;color:#100818;transform:translate(-50%,-50%) scaleX(0.750);transform-origin:center;-webkit-text-stroke:0.3px;">OU800_96F_EE</span>
<span class="t" style="left:506.8px;top:36.0px;font-size:9px;font-weight:700;color:#101030;transform:translate(-50%,-50%) scaleX(0.742);transform-origin:center;-webkit-text-stroke:0.3px;">Registered</span>
<div class="a b3" style="left:557.2px;top:16.9px;width:34.6px;height:24.3px;background:#dcdcdc;"></div>
<span class="t" style="left:574.5px;top:24.6px;font-size:7.6px;font-weight:700;color:#111;transform:translate(-50%,-50%) scaleX(0.640);transform-origin:center;-webkit-text-stroke:0.3px;">System</span>
<span class="t" style="left:574.5px;top:34.5px;font-size:7.6px;font-weight:700;color:#111;transform:translate(-50%,-50%) scaleX(0.640);transform-origin:center;-webkit-text-stroke:0.3px;">Setting</span>
<div class="a b3" style="left:594.1px;top:16.9px;width:34.8px;height:24.3px;background:#dcdcdc;"></div>
<span class="t" style="left:611.5px;top:24.6px;font-size:7.6px;font-weight:700;color:#111;transform:translate(-50%,-50%) scaleX(0.620);transform-origin:center;-webkit-text-stroke:0.3px;">Device</span>
<span class="t" style="left:611.5px;top:34.5px;font-size:7.6px;font-weight:700;color:#111;transform:translate(-50%,-50%) scaleX(0.620);transform-origin:center;-webkit-text-stroke:0.3px;">Calibration</span>
<div class="a " style="left:631.8px;top:16.0px;width:21.8px;height:25.2px;background:#c71585;"></div>
<span class="t" style="left:642.7px;top:28.9px;font-size:8px;font-weight:400;color:#5a0030;transform:translate(-50%,-50%) scaleX(0.850);transform-origin:center;">64</span>
<div class="a " style="left:293.0px;top:43.0px;width:360.6px;height:3.6px;background:#ff0000;"></div>
<span class="t" style="left:294.8px;top:56.1px;font-size:9px;font-weight:700;color:#0a0a30;transform:translate(0,-50%) scaleX(0.690);transform-origin:left center;">PROJECT:D:\SmtCustomer\2020_new4\</span>
<span class="t" style="left:411.4px;top:56.0px;font-size:8.6px;font-weight:700;color:#000;transform:translate(0,-50%) scaleX(0.736);transform-origin:left center;font-family:'Liberation Sans','Noto Sans CJK SC',sans-serif;font-weight:700;">黄其祥</span>
<span class="t" style="left:431.0px;top:56.1px;font-size:9px;font-weight:700;color:#0a0a30;transform:translate(0,-50%) scaleX(0.666);transform-origin:left center;">\RI10120210129.qn</span>
<div class="a " style="left:291.3px;top:68.3px;width:363.5px;height:454.7px;background:#fff;border-left:1px solid #a0a0a0;border-top:1px solid #a0a0a0;box-sizing:border-box"></div>
<div class="a " style="left:292.3px;top:69.5px;width:361.2px;height:16.1px;background:#f0f0f0;"></div>
<div class="a " style="left:292.3px;top:70.8px;width:82.1px;height:14.1px;background:#fa8072;"></div>
<span class="t" style="left:333.6px;top:79.6px;font-size:10.4px;font-weight:700;color:#3a0a0a;transform:translate(-50%,-50%) scaleX(0.668);transform-origin:center;-webkit-text-stroke:0.3px;">PCB Edit</span>
<div class="a " style="left:374.4px;top:70.8px;width:82.4px;height:14.1px;background:#d3d3d3;"></div>
<span class="t" style="left:415.7px;top:79.7px;font-size:10.4px;font-weight:700;color:#111;transform:translate(-50%,-50%) scaleX(0.666);transform-origin:center;-webkit-text-stroke:0.3px;">SMT Run</span>
<span class="t" style="left:524.6px;top:78.9px;font-size:10.4px;font-weight:700;color:#111;transform:translate(-50%,-50%) scaleX(0.655);transform-origin:center;-webkit-text-stroke:0.3px;">PCB Standard Mode</span>
<div class="a b3" style="left:596.0px;top:69.8px;width:57.6px;height:15.2px;background:#dcdcdc;"></div>
<span class="t" style="left:624.8px;top:77.9px;font-size:8.6px;font-weight:700;color:#111;transform:translate(-50%,-50%) scaleX(0.670);transform-origin:center;-webkit-text-stroke:0.3px;">Feeder Para</span>
<div class="a " style="left:293.6px;top:85.9px;width:361.2px;height:25.7px;background:#bc8f8f;"></div>
<div class="a b3" style="left:305.2px;top:90.0px;width:42.4px;height:18.5px;background:#dcdcdc;"></div>
<span class="t" style="left:326.4px;top:99.8px;font-size:8.5px;font-weight:700;color:#111;transform:translate(-50%,-50%) scaleX(0.660);transform-origin:center;-webkit-text-stroke:0.3px;">PCB Edit</span>
<svg class="a" style="left:349.2px;top:95.6px" width="12.5" height="9" viewBox="0 0 13 9"><path d="M0 2.6H1.6V6.4H0ZM2.4 2.6H4V6.4H2.4ZM4.8 2.6H8V0.6L13 4.5L8 8.4V6.4H4.8Z" fill="#0a0a0a"/></svg>
<div class="a b3" style="left:363.5px;top:90.0px;width:42.4px;height:18.5px;background:#dcdcdc;"></div>
<span class="t" style="left:384.7px;top:99.8px;font-size:8.5px;font-weight:700;color:#111;transform:translate(-50%,-50%) scaleX(0.660);transform-origin:center;-webkit-text-stroke:0.3px;">Optimize</span>
<svg class="a" style="left:407.5px;top:95.6px" width="11.9" height="9" viewBox="0 0 13 9"><path d="M0 2.6H1.6V6.4H0ZM2.4 2.6H4V6.4H2.4ZM4.8 2.6H8V0.6L13 4.5L8 8.4V6.4H4.8Z" fill="#0a0a0a"/></svg>
<div class="a b3" style="left:421.2px;top:90.0px;width:42.4px;height:18.5px;background:#dcdcdc;"></div>
<span class="t" style="left:442.4px;top:99.8px;font-size:8.5px;font-weight:700;color:#111;transform:translate(-50%,-50%) scaleX(0.660);transform-origin:center;-webkit-text-stroke:0.3px;">Feeder Plug</span>
<svg class="a" style="left:465.2px;top:95.6px" width="12.5" height="9" viewBox="0 0 13 9"><path d="M0 2.6H1.6V6.4H0ZM2.4 2.6H4V6.4H2.4ZM4.8 2.6H8V0.6L13 4.5L8 8.4V6.4H4.8Z" fill="#0a0a0a"/></svg>
<div class="a b3" style="left:479.5px;top:90.0px;width:42.4px;height:18.5px;background:#dcdcdc;"></div>
<span class="t" style="left:500.7px;top:99.8px;font-size:8.5px;font-weight:700;color:#111;transform:translate(-50%,-50%) scaleX(0.660);transform-origin:center;-webkit-text-stroke:0.3px;">Feeder Para</span>
<svg class="a" style="left:523.5px;top:95.6px" width="12.2" height="9" viewBox="0 0 13 9"><path d="M0 2.6H1.6V6.4H0ZM2.4 2.6H4V6.4H2.4ZM4.8 2.6H8V0.6L13 4.5L8 8.4V6.4H4.8Z" fill="#0a0a0a"/></svg>
<div class="a b3" style="left:537.5px;top:90.0px;width:42.4px;height:18.5px;background:#dcdcdc;"></div>
<span class="t" style="left:558.7px;top:99.8px;font-size:8.5px;font-weight:700;color:#111;transform:translate(-50%,-50%) scaleX(0.660);transform-origin:center;-webkit-text-stroke:0.3px;">Diagnosis</span>
<svg class="a" style="left:581.5px;top:95.6px" width="13.9" height="9" viewBox="0 0 13 9"><path d="M0 2.6H1.6V6.4H0ZM2.4 2.6H4V6.4H2.4ZM4.8 2.6H8V0.6L13 4.5L8 8.4V6.4H4.8Z" fill="#0a0a0a"/></svg>
<div class="a b3" style="left:597.2px;top:90.0px;width:42.4px;height:18.5px;background:#dcdcdc;"></div>
<span class="t" style="left:618.4px;top:99.8px;font-size:8.5px;font-weight:700;color:#111;transform:translate(-50%,-50%) scaleX(0.660);transform-origin:center;-webkit-text-stroke:0.3px;">SMT Run</span>
<span class="t" style="left:473.0px;top:120.6px;font-size:9.4px;font-weight:700;color:#000;transform:translate(-50%,-50%) scaleX(0.696);transform-origin:center;-webkit-text-stroke:0.3px;">PCB Edit</span>
<div class="a " style="left:293.6px;top:128.2px;width:361.2px;height:394.3px;background:#bc8f8f;"></div>
<span class="t" style="left:299.0px;top:140.7px;font-size:10.6px;font-weight:700;color:#2a0a0a;transform:translate(0,-50%) scaleX(0.669);transform-origin:left center;-webkit-text-stroke:0.3px;">Import PCB</span>
<div class="a b3" style="left:352.3px;top:133.5px;width:46.2px;height:13.8px;background:#dcdcdc;"></div>
<span class="t" style="left:375.4px;top:140.9px;font-size:7.6px;font-weight:700;color:#111;transform:translate(-50%,-50%) scaleX(0.675);transform-origin:center;-webkit-text-stroke:0.3px;">Import Coord</span>
<div class="a b3" style="left:400.8px;top:133.5px;width:41.8px;height:13.8px;background:#dcdcdc;"></div>
<span class="t" style="left:421.7px;top:140.9px;font-size:7.6px;font-weight:700;color:#111;transform:translate(-50%,-50%) scaleX(0.644);transform-origin:center;-webkit-text-stroke:0.3px;">Import BOM</span>
<span class="t" style="left:453.5px;top:140.7px;font-size:7.6px;font-weight:400;color:#000;transform:translate(-50%,-50%) scaleX(0.800);transform-origin:center;">0/41</span>
<div class="a " style="left:474.2px;top:134.6px;width:33.8px;height:12.2px;background:#fff;border:1px solid #555;box-sizing:border-box"></div>
<div class="a b3" style="left:510.2px;top:134.4px;width:26.4px;height:12.9px;background:#dcdcdc;"></div>
<span class="t" style="left:523.4px;top:141.4px;font-size:7.4px;font-weight:700;color:#111;transform:translate(-50%,-50%) scaleX(0.620);transform-origin:center;-webkit-text-stroke:0.3px;">Search</span>
<div class="a b3" style="left:539.0px;top:134.4px;width:25.2px;height:12.9px;background:#dcdcdc;"></div>
<span class="t" style="left:551.6px;top:141.4px;font-size:7.4px;font-weight:700;color:#111;transform:translate(-50%,-50%) scaleX(0.620);transform-origin:center;-webkit-text-stroke:0.3px;">PCB</span>
<div class="a b3" style="left:567.4px;top:134.4px;width:25.4px;height:12.9px;background:#dcdcdc;"></div>
<span class="t" style="left:580.1px;top:141.4px;font-size:7.4px;font-weight:700;color:#111;transform:translate(-50%,-50%) scaleX(0.620);transform-origin:center;-webkit-text-stroke:0.3px;">Check</span>
<div class="a b3" style="left:596.2px;top:134.4px;width:25.8px;height:12.9px;background:#dcdcdc;"></div>
<span class="t" style="left:609.1px;top:141.4px;font-size:7.4px;font-weight:700;color:#111;transform:translate(-50%,-50%) scaleX(0.620);transform-origin:center;-webkit-text-stroke:0.3px;">Angle</span>
<div class="a b3" style="left:637.3px;top:131.8px;width:16.2px;height:17.8px;background:#dcdcdc;"></div>
<span class="t" style="left:645.4px;top:140.9px;font-size:9.4px;font-weight:700;color:#000;transform:translate(-50%,-50%) scaleX(1.021);transform-origin:center;-webkit-text-stroke:0.1px;">X</span>
<div class="a " style="left:295.0px;top:150.0px;width:351.2px;height:249.2px;background:#fff;border-left:1.4px solid #111;border-top:1.4px solid #111;box-sizing:border-box"></div>
<div class="a " style="left:297.0px;top:152.2px;width:23.4px;height:10.0px;background:#d6d6d6;"></div>
<div class="a " style="left:321.8px;top:152.2px;width:24.7px;height:10.0px;background:#d6d6d6;"></div>
<span class="t" style="left:334.2px;top:158.0px;font-size:7.2px;font-weight:700;color:#222;transform:translate(-50%,-50%) scaleX(0.700);transform-origin:center;-webkit-text-stroke:0.3px;">n</span>
<div class="a " style="left:347.5px;top:152.2px;width:24.7px;height:10.0px;background:#d6d6d6;"></div>
<span class="t" style="left:359.9px;top:158.0px;font-size:7.2px;font-weight:700;color:#222;transform:translate(-50%,-50%) scaleX(0.700);transform-origin:center;-webkit-text-stroke:0.3px;">n</span>
<div class="a " style="left:373.2px;top:152.2px;width:24.7px;height:10.0px;background:#d6d6d6;"></div>
<span class="t" style="left:385.6px;top:158.0px;font-size:7.2px;font-weight:700;color:#222;transform:translate(-50%,-50%) scaleX(0.700);transform-origin:center;-webkit-text-stroke:0.3px;">n</span>
<div class="a " style="left:398.9px;top:152.2px;width:24.7px;height:10.0px;background:#d6d6d6;"></div>
<span class="t" style="left:411.2px;top:158.0px;font-size:7.2px;font-weight:700;color:#222;transform:translate(-50%,-50%) scaleX(0.700);transform-origin:center;-webkit-text-stroke:0.3px;">n</span>
<div class="a " style="left:424.6px;top:152.2px;width:24.7px;height:10.0px;background:#d6d6d6;"></div>
<span class="t" style="left:437.0px;top:158.0px;font-size:7.2px;font-weight:700;color:#222;transform:translate(-50%,-50%) scaleX(0.700);transform-origin:center;-webkit-text-stroke:0.3px;">n</span>
<div class="a " style="left:450.3px;top:152.2px;width:24.7px;height:10.0px;background:#d6d6d6;"></div>
<span class="t" style="left:462.7px;top:158.0px;font-size:7.2px;font-weight:700;color:#222;transform:translate(-50%,-50%) scaleX(0.700);transform-origin:center;-webkit-text-stroke:0.3px;">n</span>
<div class="a " style="left:476.0px;top:152.2px;width:24.7px;height:10.0px;background:#d6d6d6;"></div>
<span class="t" style="left:488.4px;top:158.0px;font-size:7.2px;font-weight:700;color:#222;transform:translate(-50%,-50%) scaleX(0.700);transform-origin:center;-webkit-text-stroke:0.3px;">n</span>
<div class="a " style="left:501.7px;top:152.2px;width:24.7px;height:10.0px;background:#d6d6d6;"></div>
<span class="t" style="left:514.1px;top:158.0px;font-size:7.2px;font-weight:700;color:#222;transform:translate(-50%,-50%) scaleX(0.700);transform-origin:center;-webkit-text-stroke:0.3px;">n</span>
<div class="a " style="left:527.4px;top:152.2px;width:24.7px;height:10.0px;background:#d6d6d6;"></div>
<span class="t" style="left:539.8px;top:158.0px;font-size:7.2px;font-weight:700;color:#222;transform:translate(-50%,-50%) scaleX(0.700);transform-origin:center;-webkit-text-stroke:0.3px;">n</span>
<div class="a " style="left:553.1px;top:152.2px;width:24.7px;height:10.0px;background:#d6d6d6;"></div>
<span class="t" style="left:565.5px;top:158.0px;font-size:7.2px;font-weight:700;color:#222;transform:translate(-50%,-50%) scaleX(0.700);transform-origin:center;-webkit-text-stroke:0.3px;">n</span>
<div class="a " style="left:578.8px;top:152.2px;width:24.7px;height:10.0px;background:#d6d6d6;"></div>
<span class="t" style="left:591.1px;top:158.0px;font-size:7.2px;font-weight:700;color:#222;transform:translate(-50%,-50%) scaleX(0.700);transform-origin:center;-webkit-text-stroke:0.3px;">n</span>
<div class="a " style="left:604.5px;top:152.2px;width:24.7px;height:10.0px;background:#d6d6d6;"></div>
<span class="t" style="left:616.9px;top:158.0px;font-size:7.2px;font-weight:700;color:#222;transform:translate(-50%,-50%) scaleX(0.700);transform-origin:center;-webkit-text-stroke:0.3px;">n</span>
<div class="a " style="left:297.0px;top:163.3px;width:23.4px;height:10.9px;background:#d6d6d6;"></div>
<div class="a " style="left:297.0px;top:175.2px;width:23.4px;height:10.9px;background:#d6d6d6;"></div>
<div class="a " style="left:297.0px;top:187.0px;width:23.4px;height:10.9px;background:#d6d6d6;"></div>
<div class="a " style="left:297.0px;top:198.9px;width:23.4px;height:10.9px;background:#d6d6d6;"></div>
<div class="a " style="left:297.0px;top:210.8px;width:23.4px;height:10.9px;background:#d6d6d6;"></div>
<div class="a " style="left:297.0px;top:222.6px;width:23.4px;height:10.9px;background:#d6d6d6;"></div>
<div class="a " style="left:297.0px;top:234.5px;width:23.4px;height:10.9px;background:#d6d6d6;"></div>
<div class="a " style="left:297.0px;top:246.4px;width:23.4px;height:10.9px;background:#d6d6d6;"></div>
<div class="a " style="left:297.0px;top:258.3px;width:23.4px;height:10.9px;background:#d6d6d6;"></div>
<div class="a " style="left:297.0px;top:270.1px;width:23.4px;height:10.9px;background:#d6d6d6;"></div>
<div class="a " style="left:297.0px;top:282.0px;width:23.4px;height:10.9px;background:#d6d6d6;"></div>
<div class="a " style="left:297.0px;top:293.9px;width:23.4px;height:10.9px;background:#d6d6d6;"></div>
<div class="a " style="left:297.0px;top:305.7px;width:23.4px;height:10.9px;background:#d6d6d6;"></div>
<div class="a " style="left:297.0px;top:317.6px;width:23.4px;height:10.9px;background:#d6d6d6;"></div>
<div class="a " style="left:297.0px;top:329.5px;width:23.4px;height:10.9px;background:#d6d6d6;"></div>
<div class="a " style="left:297.0px;top:341.3px;width:23.4px;height:10.9px;background:#d6d6d6;"></div>
<div class="a " style="left:297.0px;top:353.2px;width:23.4px;height:10.9px;background:#d6d6d6;"></div>
<div class="a " style="left:297.0px;top:365.1px;width:23.4px;height:10.9px;background:#d6d6d6;"></div>
<div class="a " style="left:297.0px;top:377.0px;width:23.4px;height:10.9px;background:#d6d6d6;"></div>
<svg class="a" style="left:298.6px;top:166.8px" width="3" height="4.4" viewBox="0 0 3 4.4"><path d="M0 0L3 2.2L0 4.4Z" fill="#222"/></svg>
<div class="a " style="left:297.0px;top:198.2px;width:333.0px;height:1.0px;background:#8a8a8a;"></div>
<div class="a " style="left:297.0px;top:210.1px;width:333.0px;height:1.0px;background:#8a8a8a;"></div>
<div class="a " style="left:297.0px;top:221.9px;width:333.0px;height:1.0px;background:#8a8a8a;"></div>
<div class="a " style="left:297.0px;top:269.4px;width:333.0px;height:1.0px;background:#8a8a8a;"></div>
<div class="a " style="left:297.0px;top:281.3px;width:333.0px;height:1.0px;background:#8a8a8a;"></div>
<div class="a " style="left:297.0px;top:293.2px;width:333.0px;height:1.0px;background:#8a8a8a;"></div>
<div class="a " style="left:297.0px;top:340.6px;width:333.0px;height:1.0px;background:#8a8a8a;"></div>
<div class="a " style="left:297.0px;top:352.5px;width:333.0px;height:1.0px;background:#8a8a8a;"></div>
<div class="a " style="left:297.0px;top:364.4px;width:333.0px;height:1.0px;background:#8a8a8a;"></div>
<div class="a " style="left:372.2px;top:152.2px;width:1.0px;height:237.6px;background:#8a8a8a;"></div>
<div class="a " style="left:397.9px;top:152.2px;width:1.0px;height:237.6px;background:#8a8a8a;"></div>
<div class="a " style="left:449.3px;top:152.2px;width:1.0px;height:237.6px;background:#8a8a8a;"></div>
<div class="a " style="left:475.0px;top:152.2px;width:1.0px;height:237.6px;background:#8a8a8a;"></div>
<div class="a " style="left:552.1px;top:152.2px;width:1.0px;height:237.6px;background:#8a8a8a;"></div>
<div class="a " style="left:577.8px;top:152.2px;width:1.0px;height:237.6px;background:#8a8a8a;"></div>
<div class="a " style="left:629.2px;top:152.2px;width:1.0px;height:237.6px;background:#8a8a8a;"></div>
<div class="a " style="left:320.8px;top:163.0px;width:0.8px;height:226.8px;background:#b8b8b8;"></div>
<div class="a " style="left:321.8px;top:163.3px;width:25.2px;height:11.5px;background:#0078d7;"></div>
<span class="t" style="left:334.2px;top:169.0px;font-size:7.4px;font-weight:400;color:#fff;transform:translate(-50%,-50%) scaleX(0.860);transform-origin:center;">R17</span>
<span class="t" style="left:359.9px;top:169.0px;font-size:7.4px;font-weight:400;color:#555;transform:translate(-50%,-50%) scaleX(0.860);transform-origin:center;">u0603</span>
<span class="t" style="left:385.6px;top:169.0px;font-size:7.4px;font-weight:400;color:#555;transform:translate(-50%,-50%) scaleX(0.860);transform-origin:center;">3.4</span>
<span class="t" style="left:334.2px;top:180.9px;font-size:7.4px;font-weight:400;color:#555;transform:translate(-50%,-50%) scaleX(0.860);transform-origin:center;">R20</span>
<span class="t" style="left:359.9px;top:180.9px;font-size:7.4px;font-weight:400;color:#555;transform:translate(-50%,-50%) scaleX(0.860);transform-origin:center;">u0603</span>
<span class="t" style="left:374.4px;top:180.9px;font-size:7.4px;font-weight:400;color:#555;transform:translate(0,-50%) scaleX(0.999);transform-origin:left center;">21. . . .</span>
<span class="t" style="left:334.2px;top:192.8px;font-size:7.4px;font-weight:400;color:#555;transform:translate(-50%,-50%) scaleX(0.860);transform-origin:center;">R3</span>
<span class="t" style="left:359.9px;top:192.8px;font-size:7.4px;font-weight:400;color:#555;transform:translate(-50%,-50%) scaleX(0.860);transform-origin:center;">u0603</span>
<span class="t" style="left:374.4px;top:192.8px;font-size:7.4px;font-weight:400;color:#555;transform:translate(0,-50%) scaleX(0.999);transform-origin:left center;">29. . . .</span>
<span class="t" style="left:334.2px;top:204.6px;font-size:7.4px;font-weight:400;color:#555;transform:translate(-50%,-50%) scaleX(0.860);transform-origin:center;">R25</span>
<span class="t" style="left:359.9px;top:204.6px;font-size:7.4px;font-weight:400;color:#555;transform:translate(-50%,-50%) scaleX(0.860);transform-origin:center;">u0603</span>
<span class="t" style="left:374.4px;top:204.6px;font-size:7.4px;font-weight:400;color:#555;transform:translate(0,-50%) scaleX(0.999);transform-origin:left center;">21. . . .</span>
<span class="t" style="left:334.2px;top:216.5px;font-size:7.4px;font-weight:400;color:#555;transform:translate(-50%,-50%) scaleX(0.860);transform-origin:center;">R26</span>
<span class="t" style="left:359.9px;top:216.5px;font-size:7.4px;font-weight:400;color:#555;transform:translate(-50%,-50%) scaleX(0.860);transform-origin:center;">u0603</span>
<span class="t" style="left:374.4px;top:216.5px;font-size:7.4px;font-weight:400;color:#555;transform:translate(0,-50%) scaleX(0.999);transform-origin:left center;">21. . . .</span>
<span class="t" style="left:334.2px;top:228.4px;font-size:7.4px;font-weight:400;color:#555;transform:translate(-50%,-50%) scaleX(0.860);transform-origin:center;">R27</span>
<span class="t" style="left:359.9px;top:228.4px;font-size:7.4px;font-weight:400;color:#555;transform:translate(-50%,-50%) scaleX(0.860);transform-origin:center;">u0603</span>
<span class="t" style="left:374.4px;top:228.4px;font-size:7.4px;font-weight:400;color:#555;transform:translate(0,-50%) scaleX(0.999);transform-origin:left center;">21. . . .</span>
<span class="t" style="left:334.2px;top:240.3px;font-size:7.4px;font-weight:400;color:#555;transform:translate(-50%,-50%) scaleX(0.860);transform-origin:center;">R28</span>
<span class="t" style="left:359.9px;top:240.3px;font-size:7.4px;font-weight:400;color:#555;transform:translate(-50%,-50%) scaleX(0.860);transform-origin:center;">u0603</span>
<span class="t" style="left:374.4px;top:240.3px;font-size:7.4px;font-weight:400;color:#555;transform:translate(0,-50%) scaleX(0.999);transform-origin:left center;">21. . . .</span>
<span class="t" style="left:334.2px;top:252.1px;font-size:7.4px;font-weight:400;color:#555;transform:translate(-50%,-50%) scaleX(0.860);transform-origin:center;">R37</span>
<span class="t" style="left:359.9px;top:252.1px;font-size:7.4px;font-weight:400;color:#555;transform:translate(-50%,-50%) scaleX(0.860);transform-origin:center;">u0603</span>
<span class="t" style="left:374.4px;top:252.1px;font-size:7.4px;font-weight:400;color:#555;transform:translate(0,-50%) scaleX(0.999);transform-origin:left center;">26. . . .</span>
<span class="t" style="left:334.2px;top:264.0px;font-size:7.4px;font-weight:400;color:#555;transform:translate(-50%,-50%) scaleX(0.860);transform-origin:center;">R10</span>
<span class="t" style="left:359.9px;top:264.0px;font-size:7.4px;font-weight:400;color:#555;transform:translate(-50%,-50%) scaleX(0.860);transform-origin:center;">u0603</span>
<span class="t" style="left:385.6px;top:264.0px;font-size:7.4px;font-weight:400;color:#555;transform:translate(-50%,-50%) scaleX(0.860);transform-origin:center;">1.927</span>
<span class="t" style="left:334.2px;top:275.9px;font-size:7.4px;font-weight:400;color:#555;transform:translate(-50%,-50%) scaleX(0.860);transform-origin:center;">C5</span>
<span class="t" style="left:359.9px;top:275.9px;font-size:7.4px;font-weight:400;color:#555;transform:translate(-50%,-50%) scaleX(0.860);transform-origin:center;">u0603</span>
<span class="t" style="left:374.4px;top:275.9px;font-size:7.4px;font-weight:400;color:#555;transform:translate(0,-50%) scaleX(0.999);transform-origin:left center;">18. . . .</span>
<span class="t" style="left:334.2px;top:287.7px;font-size:7.4px;font-weight:400;color:#555;transform:translate(-50%,-50%) scaleX(0.860);transform-origin:center;">C7</span>
<span class="t" style="left:359.9px;top:287.7px;font-size:7.4px;font-weight:400;color:#555;transform:translate(-50%,-50%) scaleX(0.860);transform-origin:center;">u0603</span>
<span class="t" style="left:374.4px;top:287.7px;font-size:7.4px;font-weight:400;color:#555;transform:translate(0,-50%) scaleX(0.999);transform-origin:left center;">28. . . .</span>
<span class="t" style="left:400.1px;top:287.7px;font-size:7.4px;font-weight:400;color:#555;transform:translate(0,-50%) scaleX(0.999);transform-origin:left center;">91. . . .</span>
<span class="t" style="left:437.0px;top:287.7px;font-size:7.4px;font-weight:400;color:#555;transform:translate(-50%,-50%) scaleX(0.860);transform-origin:center;">0</span>
<span class="t" style="left:452.3px;top:287.7px;font-size:7.4px;font-weight:400;color:#555;transform:translate(0,-50%) scaleX(0.860);transform-origin:left center;">100nF</span>
<span class="t" style="left:334.2px;top:299.6px;font-size:7.4px;font-weight:400;color:#555;transform:translate(-50%,-50%) scaleX(0.860);transform-origin:center;">C12</span>
<span class="t" style="left:359.9px;top:299.6px;font-size:7.4px;font-weight:400;color:#555;transform:translate(-50%,-50%) scaleX(0.860);transform-origin:center;">u0603</span>
<span class="t" style="left:385.6px;top:299.6px;font-size:7.4px;font-weight:400;color:#555;transform:translate(-50%,-50%) scaleX(0.860);transform-origin:center;">5.8</span>
<span class="t" style="left:411.2px;top:299.6px;font-size:7.4px;font-weight:400;color:#555;transform:translate(-50%,-50%) scaleX(0.860);transform-origin:center;">32.73</span>
<span class="t" style="left:437.0px;top:299.6px;font-size:7.4px;font-weight:400;color:#555;transform:translate(-50%,-50%) scaleX(0.860);transform-origin:center;">90</span>
<span class="t" style="left:452.3px;top:299.6px;font-size:7.4px;font-weight:400;color:#555;transform:translate(0,-50%) scaleX(0.860);transform-origin:left center;">100nF</span>
<span class="t" style="left:334.2px;top:311.5px;font-size:7.4px;font-weight:400;color:#555;transform:translate(-50%,-50%) scaleX(0.860);transform-origin:center;">C13</span>
<span class="t" style="left:359.9px;top:311.5px;font-size:7.4px;font-weight:400;color:#555;transform:translate(-50%,-50%) scaleX(0.860);transform-origin:center;">u0603</span>
<span class="t" style="left:385.6px;top:311.5px;font-size:7.4px;font-weight:400;color:#555;transform:translate(-50%,-50%) scaleX(0.780);transform-origin:center;">6.8654</span>
<span class="t" style="left:400.1px;top:311.5px;font-size:7.4px;font-weight:400;color:#555;transform:translate(0,-50%) scaleX(0.999);transform-origin:left center;">32. . . .</span>
<span class="t" style="left:437.0px;top:311.5px;font-size:7.4px;font-weight:400;color:#555;transform:translate(-50%,-50%) scaleX(0.860);transform-origin:center;">90</span>
<span class="t" style="left:452.3px;top:311.5px;font-size:7.4px;font-weight:400;color:#555;transform:translate(0,-50%) scaleX(0.860);transform-origin:left center;">100nF</span>
<span class="t" style="left:334.2px;top:323.3px;font-size:7.4px;font-weight:400;color:#555;transform:translate(-50%,-50%) scaleX(0.860);transform-origin:center;">C14</span>
<span class="t" style="left:359.9px;top:323.3px;font-size:7.4px;font-weight:400;color:#555;transform:translate(-50%,-50%) scaleX(0.860);transform-origin:center;">u0603</span>
<span class="t" style="left:385.6px;top:323.3px;font-size:7.4px;font-weight:400;color:#555;transform:translate(-50%,-50%) scaleX(0.860);transform-origin:center;">8.4</span>
<span class="t" style="left:411.2px;top:323.3px;font-size:7.4px;font-weight:400;color:#555;transform:translate(-50%,-50%) scaleX(0.860);transform-origin:center;">47.8</span>
<span class="t" style="left:437.0px;top:323.3px;font-size:7.4px;font-weight:400;color:#555;transform:translate(-50%,-50%) scaleX(0.860);transform-origin:center;">270</span>
<span class="t" style="left:452.3px;top:323.3px;font-size:7.4px;font-weight:400;color:#555;transform:translate(0,-50%) scaleX(0.860);transform-origin:left center;">100nF</span>
<span class="t" style="left:334.2px;top:335.2px;font-size:7.4px;font-weight:400;color:#555;transform:translate(-50%,-50%) scaleX(0.860);transform-origin:center;">C17</span>
<span class="t" style="left:359.9px;top:335.2px;font-size:7.4px;font-weight:400;color:#555;transform:translate(-50%,-50%) scaleX(0.860);transform-origin:center;">u0603</span>
<span class="t" style="left:374.4px;top:335.2px;font-size:7.4px;font-weight:400;color:#555;transform:translate(0,-50%) scaleX(0.999);transform-origin:left center;">20. . . .</span>
<span class="t" style="left:400.1px;top:335.2px;font-size:7.4px;font-weight:400;color:#555;transform:translate(0,-50%) scaleX(0.999);transform-origin:left center;">36. . . .</span>
<span class="t" style="left:437.0px;top:335.2px;font-size:7.4px;font-weight:400;color:#555;transform:translate(-50%,-50%) scaleX(0.860);transform-origin:center;">90</span>
<span class="t" style="left:452.3px;top:335.2px;font-size:7.4px;font-weight:400;color:#555;transform:translate(0,-50%) scaleX(0.860);transform-origin:left center;">100nF</span>
<span class="t" style="left:334.2px;top:347.1px;font-size:7.4px;font-weight:400;color:#555;transform:translate(-50%,-50%) scaleX(0.860);transform-origin:center;">C20</span>
<span class="t" style="left:359.9px;top:347.1px;font-size:7.4px;font-weight:400;color:#555;transform:translate(-50%,-50%) scaleX(0.860);transform-origin:center;">u0603</span>
<span class="t" style="left:385.6px;top:347.1px;font-size:7.4px;font-weight:400;color:#555;transform:translate(-50%,-50%) scaleX(0.780);transform-origin:center;">22.319</span>
<span class="t" style="left:400.1px;top:347.1px;font-size:7.4px;font-weight:400;color:#555;transform:translate(0,-50%) scaleX(0.999);transform-origin:left center;">32. . . .</span>
<span class="t" style="left:437.0px;top:347.1px;font-size:7.4px;font-weight:400;color:#555;transform:translate(-50%,-50%) scaleX(0.860);transform-origin:center;">270</span>
<span class="t" style="left:452.3px;top:347.1px;font-size:7.4px;font-weight:400;color:#555;transform:translate(0,-50%) scaleX(0.860);transform-origin:left center;">100nF</span>
<span class="t" style="left:334.2px;top:359.0px;font-size:7.4px;font-weight:400;color:#555;transform:translate(-50%,-50%) scaleX(0.860);transform-origin:center;">C23</span>
<span class="t" style="left:359.9px;top:359.0px;font-size:7.4px;font-weight:400;color:#555;transform:translate(-50%,-50%) scaleX(0.860);transform-origin:center;">u0603</span>
<span class="t" style="left:374.4px;top:359.0px;font-size:7.4px;font-weight:400;color:#555;transform:translate(0,-50%) scaleX(0.999);transform-origin:left center;">18. . . .</span>
<span class="t" style="left:400.1px;top:359.0px;font-size:7.4px;font-weight:400;color:#555;transform:translate(0,-50%) scaleX(0.999);transform-origin:left center;">32. . . .</span>
<span class="t" style="left:437.0px;top:359.0px;font-size:7.4px;font-weight:400;color:#555;transform:translate(-50%,-50%) scaleX(0.860);transform-origin:center;">90</span>
<span class="t" style="left:452.3px;top:359.0px;font-size:7.4px;font-weight:400;color:#555;transform:translate(0,-50%) scaleX(0.860);transform-origin:left center;">100nF</span>
<span class="t" style="left:334.2px;top:370.8px;font-size:7.4px;font-weight:400;color:#555;transform:translate(-50%,-50%) scaleX(0.860);transform-origin:center;">C24</span>
<span class="t" style="left:359.9px;top:370.8px;font-size:7.4px;font-weight:400;color:#555;transform:translate(-50%,-50%) scaleX(0.860);transform-origin:center;">u0603</span>
<span class="t" style="left:385.6px;top:370.8px;font-size:7.4px;font-weight:400;color:#555;transform:translate(-50%,-50%) scaleX(0.860);transform-origin:center;">18</span>
<span class="t" style="left:411.2px;top:370.8px;font-size:7.4px;font-weight:400;color:#555;transform:translate(-50%,-50%) scaleX(0.860);transform-origin:center;">47.8</span>
<span class="t" style="left:437.0px;top:370.8px;font-size:7.4px;font-weight:400;color:#555;transform:translate(-50%,-50%) scaleX(0.860);transform-origin:center;">270</span>
<span class="t" style="left:452.3px;top:370.8px;font-size:7.4px;font-weight:400;color:#555;transform:translate(0,-50%) scaleX(0.860);transform-origin:left center;">100nF</span>
<span class="t" style="left:334.2px;top:382.7px;font-size:7.4px;font-weight:400;color:#555;transform:translate(-50%,-50%) scaleX(0.860);transform-origin:center;">C21</span>
<span class="t" style="left:359.9px;top:382.7px;font-size:7.4px;font-weight:400;color:#555;transform:translate(-50%,-50%) scaleX(0.860);transform-origin:center;">u0603</span>
<span class="t" style="left:374.4px;top:382.7px;font-size:7.4px;font-weight:400;color:#555;transform:translate(0,-50%) scaleX(0.999);transform-origin:left center;">21. . . .</span>
<span class="t" style="left:400.1px;top:382.7px;font-size:7.4px;font-weight:400;color:#555;transform:translate(0,-50%) scaleX(0.999);transform-origin:left center;">35. . . .</span>
<span class="t" style="left:437.0px;top:382.7px;font-size:7.4px;font-weight:400;color:#555;transform:translate(-50%,-50%) scaleX(0.860);transform-origin:center;">180</span>
<span class="t" style="left:452.3px;top:382.7px;font-size:7.4px;font-weight:400;color:#555;transform:translate(0,-50%) scaleX(0.860);transform-origin:left center;">100nF</span>
<div class="a " style="left:630.7px;top:152.2px;width:6.1px;height:10.0px;background:#d6d6d6;"></div>
<div class="a " style="left:637.8px;top:152.0px;width:7.6px;height:238.0px;background:#f4f4f4;"></div>
<div class="a " style="left:637.8px;top:159.2px;width:7.6px;height:103.3px;background:#cdcdcd;"></div>
<svg class="a" style="left:639.6px;top:154px" width="5" height="3.4" viewBox="0 0 5 3.4"><path d="M0.4 3L2.5 0.6L4.6 3" stroke="#555" stroke-width="0.9" fill="none"/></svg>
<svg class="a" style="left:639.6px;top:384.2px" width="5" height="3.4" viewBox="0 0 5 3.4"><path d="M0.4 0.4L2.5 2.8L4.6 0.4" stroke="#333" stroke-width="0.9" fill="none"/></svg>
<div class="a " style="left:296.4px;top:390.2px;width:341.1px;height:9.0px;background:#f0f0f0;"></div>
<div class="a " style="left:304.3px;top:391.0px;width:99.7px;height:7.6px;background:#cdcdcd;"></div>
<svg class="a" style="left:298.4px;top:392.2px" width="3.4" height="5" viewBox="0 0 3.4 5"><path d="M3 0.4L0.6 2.5L3 4.6" stroke="#333" stroke-width="0.9" fill="none"/></svg>
<svg class="a" style="left:631.6px;top:392.2px" width="3.4" height="5" viewBox="0 0 3.4 5"><path d="M0.4 0.4L2.8 2.5L0.4 4.6" stroke="#333" stroke-width="0.9" fill="none"/></svg>
<div class="a " style="left:637.5px;top:390.2px;width:8.7px;height:9.0px;background:#f0f0f0;"></div>
<div class="a " style="left:390.7px;top:156.4px;width:93.5px;height:121.2px;background:#fbfbfb;box-shadow:1px 1px 1.5px rgba(0,0,0,.55)"></div>
<div class="a " style="left:390.7px;top:156.4px;width:13.3px;height:121.2px;background:#f1f1f1;"></div>
<span class="t" style="left:409.2px;top:162.6px;font-size:7.6px;font-weight:700;color:#1a1a1a;transform:translate(0,-50%) scaleX(0.680);transform-origin:left center;-webkit-text-stroke:0.3px;">Label</span>
<span class="t" style="left:409.2px;top:174.4px;font-size:7.6px;font-weight:700;color:#1a1a1a;transform:translate(0,-50%) scaleX(0.690);transform-origin:left center;-webkit-text-stroke:0.3px;">Chip Value</span>
<span class="t" style="left:409.2px;top:185.7px;font-size:7.6px;font-weight:700;color:#1a1a1a;transform:translate(0,-50%) scaleX(0.678);transform-origin:left center;-webkit-text-stroke:0.3px;">Footprint</span>
<span class="t" style="left:409.2px;top:197.0px;font-size:7.6px;font-weight:700;color:#1a1a1a;transform:translate(0,-50%) scaleX(0.592);transform-origin:left center;-webkit-text-stroke:0.3px;">X</span>
<span class="t" style="left:409.2px;top:208.3px;font-size:7.6px;font-weight:700;color:#1a1a1a;transform:translate(0,-50%) scaleX(0.592);transform-origin:left center;-webkit-text-stroke:0.3px;">Y</span>
<span class="t" style="left:409.2px;top:219.6px;font-size:7.6px;font-weight:700;color:#1a1a1a;transform:translate(0,-50%) scaleX(0.668);transform-origin:left center;-webkit-text-stroke:0.3px;">Angle</span>
<span class="t" style="left:409.2px;top:233.6px;font-size:7.6px;font-weight:700;color:#1a1a1a;transform:translate(0,-50%) scaleX(0.672);transform-origin:left center;-webkit-text-stroke:0.3px;">Re-Write</span>
<span class="t" style="left:409.2px;top:245.7px;font-size:7.6px;font-weight:700;color:#1a1a1a;transform:translate(0,-50%) scaleX(0.675);transform-origin:left center;-webkit-text-stroke:0.3px;">Hiden Current Column</span>
<span class="t" style="left:409.2px;top:257.0px;font-size:7.6px;font-weight:700;color:#1a1a1a;transform:translate(0,-50%) scaleX(0.683);transform-origin:left center;-webkit-text-stroke:0.3px;">Show All Columns</span>
<span class="t" style="left:409.2px;top:271.1px;font-size:7.6px;font-weight:700;color:#1a1a1a;transform:translate(0,-50%) scaleX(0.694);transform-origin:left center;-webkit-text-stroke:0.3px;">Optional</span>
<div class="a " style="left:405.0px;top:226.3px;width:78.0px;height:0.6px;background:#e2e2e2;"></div>
<div class="a " style="left:405.0px;top:263.6px;width:78.0px;height:0.6px;background:#e2e2e2;"></div>
<svg class="a" style="left:476.6px;top:269.4px" width="2" height="3" viewBox="0 0 2 3"><path d="M0 0L2 1.5L0 3Z" fill="#111"/></svg>
<span class="t" style="left:360.5px;top:408.3px;font-size:8px;font-weight:700;color:#1a0a0a;transform:translate(-50%,-50%) scaleX(0.660);transform-origin:center;-webkit-text-stroke:0.3px;">Sign in PCB XY (mm)</span>
<div class="a b3" style="left:297.0px;top:416.7px;width:64.8px;height:13.7px;background:#dcdcdc;"></div>
<span class="t" style="left:329.4px;top:424.0px;font-size:8.4px;font-weight:700;color:#111;transform:translate(-50%,-50%) scaleX(0.625);transform-origin:center;-webkit-text-stroke:0.3px;">Auto Get Sign</span>
<div class="a " style="left:366.0px;top:421.7px;width:6.2px;height:6.2px;background:#fff;border:0.6px solid #777;box-sizing:border-box"></div>
<svg class="a" style="left:366.0px;top:421.7px" width="6.2" height="6.2" viewBox="0 0 6 6"><path d="M1.2 3L2.5 4.4L4.9 1.5" stroke="#222" stroke-width="0.8" fill="none"/></svg>
<span class="t" style="left:0.0px;top:425.0px;font-size:7.8px;font-weight:700;color:#123;transform:translate(0,-50%) scaleX(0.640);transform-origin:left center;-webkit-text-stroke:0.3px;"></span>
<span class="t" style="left:376.0px;top:425.0px;font-size:8.6px;font-weight:700;color:#1a0a0a;transform:translate(0,-50%) scaleX(0.622);transform-origin:left center;-webkit-text-stroke:0.3px;">Pricise Mode</span>
<div class="a " style="left:297.4px;top:431.9px;width:35.6px;height:12.4px;background:#ffa500;border:1px solid rgba(0,0,0,.25);box-sizing:border-box"></div>
<span class="t" style="left:315.2px;top:438.5px;font-size:8px;font-weight:700;color:#3a2000;transform:translate(-50%,-50%) scaleX(0.657);transform-origin:center;-webkit-text-stroke:0.3px;">Sign1</span>
<span class="t" style="left:340.3px;top:438.2px;font-size:6.6px;font-weight:700;color:#2a1a1a;transform:translate(-50%,-50%) scaleX(0.720);transform-origin:center;-webkit-text-stroke:0.15px;">X</span>
<span class="t" style="left:380.1px;top:438.2px;font-size:6.6px;font-weight:700;color:#2a1a1a;transform:translate(-50%,-50%) scaleX(0.720);transform-origin:center;-webkit-text-stroke:0.15px;">Y</span>
<div class="a " style="left:345.8px;top:432.9px;width:30.2px;height:11.8px;background:#fff;"></div>
<div class="a " style="left:384.6px;top:432.9px;width:31.3px;height:11.8px;background:#fff;"></div>
<span class="t" style="left:347.3px;top:438.9px;font-size:7.6px;font-weight:400;color:#222;transform:translate(0,-50%) scaleX(0.860);transform-origin:left center;">31.4257</span>
<span class="t" style="left:386.2px;top:438.9px;font-size:7.6px;font-weight:400;color:#222;transform:translate(0,-50%) scaleX(0.860);transform-origin:left center;">11.0698</span>
<div class="a " style="left:297.4px;top:447.9px;width:35.6px;height:12.4px;background:#48d1cc;border:1px solid rgba(0,0,0,.25);box-sizing:border-box"></div>
<span class="t" style="left:315.2px;top:454.5px;font-size:8px;font-weight:700;color:#0a2a2a;transform:translate(-50%,-50%) scaleX(0.657);transform-origin:center;-webkit-text-stroke:0.3px;">Sign2</span>
<span class="t" style="left:340.3px;top:454.2px;font-size:6.6px;font-weight:700;color:#2a1a1a;transform:translate(-50%,-50%) scaleX(0.720);transform-origin:center;-webkit-text-stroke:0.15px;">X</span>
<span class="t" style="left:380.1px;top:454.2px;font-size:6.6px;font-weight:700;color:#2a1a1a;transform:translate(-50%,-50%) scaleX(0.720);transform-origin:center;-webkit-text-stroke:0.15px;">Y</span>
<div class="a " style="left:345.8px;top:448.9px;width:30.2px;height:11.8px;background:#fff;"></div>
<div class="a " style="left:384.6px;top:448.9px;width:31.3px;height:11.8px;background:#fff;"></div>
<span class="t" style="left:347.3px;top:454.9px;font-size:7.6px;font-weight:400;color:#222;transform:translate(0,-50%) scaleX(0.860);transform-origin:left center;">17.806</span>
<span class="t" style="left:386.2px;top:454.9px;font-size:7.6px;font-weight:400;color:#222;transform:translate(0,-50%) scaleX(0.860);transform-origin:left center;">2.8071</span>
<div class="a " style="left:297.4px;top:464.0px;width:35.6px;height:12.4px;background:#9370db;border:1px solid rgba(0,0,0,.25);box-sizing:border-box"></div>
<span class="t" style="left:315.2px;top:470.6px;font-size:8px;font-weight:700;color:#fff;transform:translate(-50%,-50%) scaleX(0.657);transform-origin:center;-webkit-text-stroke:0.3px;">Sign3</span>
<span class="t" style="left:340.3px;top:470.3px;font-size:6.6px;font-weight:700;color:#2a1a1a;transform:translate(-50%,-50%) scaleX(0.720);transform-origin:center;-webkit-text-stroke:0.15px;">X</span>
<span class="t" style="left:380.1px;top:470.3px;font-size:6.6px;font-weight:700;color:#2a1a1a;transform:translate(-50%,-50%) scaleX(0.720);transform-origin:center;-webkit-text-stroke:0.15px;">Y</span>
<div class="a " style="left:345.8px;top:465.0px;width:30.2px;height:11.8px;background:#fff;"></div>
<div class="a " style="left:384.6px;top:465.0px;width:31.3px;height:11.8px;background:#fff;"></div>
<span class="t" style="left:347.3px;top:471.0px;font-size:7.6px;font-weight:400;color:#222;transform:translate(0,-50%) scaleX(0.860);transform-origin:left center;">32.9</span>
<span class="t" style="left:386.2px;top:471.0px;font-size:7.6px;font-weight:400;color:#222;transform:translate(0,-50%) scaleX(0.860);transform-origin:left center;">43.5</span>
<div class="a " style="left:297.4px;top:480.0px;width:35.6px;height:12.4px;background:#4682b4;border:1px solid rgba(0,0,0,.25);box-sizing:border-box"></div>
<span class="t" style="left:315.2px;top:486.6px;font-size:8px;font-weight:700;color:#fff;transform:translate(-50%,-50%) scaleX(0.657);transform-origin:center;-webkit-text-stroke:0.3px;">Sign4</span>
<span class="t" style="left:340.3px;top:486.3px;font-size:6.6px;font-weight:700;color:#2a1a1a;transform:translate(-50%,-50%) scaleX(0.720);transform-origin:center;-webkit-text-stroke:0.15px;">X</span>
<span class="t" style="left:380.1px;top:486.3px;font-size:6.6px;font-weight:700;color:#2a1a1a;transform:translate(-50%,-50%) scaleX(0.720);transform-origin:center;-webkit-text-stroke:0.15px;">Y</span>
<div class="a " style="left:345.8px;top:481.0px;width:30.2px;height:11.8px;background:#fff;"></div>
<div class="a " style="left:384.6px;top:481.0px;width:31.3px;height:11.8px;background:#fff;"></div>
<span class="t" style="left:347.3px;top:487.0px;font-size:7.6px;font-weight:400;color:#222;transform:translate(0,-50%) scaleX(0.860);transform-origin:left center;">1.7</span>
<span class="t" style="left:386.2px;top:487.0px;font-size:7.6px;font-weight:400;color:#222;transform:translate(0,-50%) scaleX(0.860);transform-origin:left center;">32.2</span>
<svg class="a" style="left:424.4px;top:442.7px" width="15.6" height="8.6" viewBox="0 0 15.6 8.6"><path d="M0 2.2H9.4V0L15.6 4.3L9.4 8.6V6.4H0Z" fill="#000"/></svg>
<svg class="a" style="left:424.4px;top:474.6px" width="15.6" height="8.6" viewBox="0 0 15.6 8.6"><path d="M0 2.2H9.4V0L15.6 4.3L9.4 8.6V6.4H0Z" fill="#000"/></svg>
<span class="t" style="left:541.2px;top:407.5px;font-size:7.4px;font-weight:700;color:#1a0a0a;transform:translate(-50%,-50%) scaleX(0.712);transform-origin:center;-webkit-text-stroke:0.3px;">Sign in Machine XY (step)</span>
<div class="a " style="left:589.4px;top:404.0px;width:6.6px;height:6.6px;background:#fff;border:0.6px solid #999;box-sizing:border-box"></div>
<span class="t" style="left:600.4px;top:407.2px;font-size:6.6px;font-weight:700;color:#111;transform:translate(0,-50%) scaleX(0.982);transform-origin:left center;font-family:'Liberation Sans','Noto Sans CJK SC',sans-serif;">旋转180度放置</span>
<div class="a " style="left:491.6px;top:443.4px;width:116.8px;height:29.0px;background:#8fbc8f;"></div>
<span class="t" style="left:549.5px;top:458.2px;font-size:10.5px;font-weight:700;color:#000;transform:translate(-50%,-50%) scaleX(0.821);transform-origin:center;-webkit-text-stroke:0.3px;">PCB</span>
<div class="a " style="left:493.3px;top:445.0px;width:6.7px;height:6.8px;background:#ffa500;border:1px solid #f4f4f4;box-sizing:border-box"></div>
<span class="t" style="left:502.7px;top:449.5px;font-size:7.8px;font-weight:700;color:#0a1a0a;transform:translate(0,-50%) scaleX(0.688);transform-origin:left center;-webkit-text-stroke:0.1px;">Sign1</span>
<div class="a " style="left:493.3px;top:464.2px;width:6.7px;height:6.8px;background:#4682b4;border:1px solid #f4f4f4;box-sizing:border-box"></div>
<span class="t" style="left:502.7px;top:469.0px;font-size:7.8px;font-weight:700;color:#0a1a0a;transform:translate(0,-50%) scaleX(0.688);transform-origin:left center;-webkit-text-stroke:0.1px;">Sign4</span>
<div class="a " style="left:599.4px;top:445.0px;width:7.0px;height:7.0px;background:#9370db;border:1px solid #f4f4f4;box-sizing:border-box"></div>
<span class="t" style="left:586.2px;top:449.8px;font-size:7.8px;font-weight:700;color:#0a1a0a;transform:translate(-100%,-50%) scaleX(0.725);transform-origin:right center;-webkit-text-stroke:0.1px;">Sign3</span>
<div class="a " style="left:599.4px;top:463.2px;width:7.0px;height:7.0px;background:#48d1cc;border:1px solid #f4f4f4;box-sizing:border-box"></div>
<span class="t" style="left:586.2px;top:468.6px;font-size:7.8px;font-weight:700;color:#0a1a0a;transform:translate(-100%,-50%) scaleX(0.725);transform-origin:right center;-webkit-text-stroke:0.1px;">Sign2</span>
<div class="a " style="left:491.1px;top:420.6px;width:26.3px;height:17.0px;background:#ffa500;"></div>
<span class="t" style="left:504.2px;top:425.2px;font-size:7.8px;font-weight:400;color:#7a3c00;transform:translate(-50%,-50%) scaleX(0.800);transform-origin:center;">X50000</span>
<span class="t" style="left:504.2px;top:433.2px;font-size:7.8px;font-weight:400;color:#7a3c00;transform:translate(-50%,-50%) scaleX(0.800);transform-origin:center;">Y50000</span>
<div class="a " style="left:581.1px;top:420.6px;width:27.1px;height:17.6px;background:#9370db;"></div>
<span class="t" style="left:594.7px;top:425.5px;font-size:7.8px;font-weight:400;color:#3a2488;transform:translate(-50%,-50%) scaleX(0.817);transform-origin:center;">X50411</span>
<span class="t" style="left:594.7px;top:433.5px;font-size:7.8px;font-weight:400;color:#3a2488;transform:translate(-50%,-50%) scaleX(0.800);transform-origin:center;">Y70245</span>
<div class="a " style="left:492.1px;top:475.9px;width:26.1px;height:18.9px;background:#4682b4;"></div>
<span class="t" style="left:505.2px;top:481.5px;font-size:7.8px;font-weight:400;color:#163f74;transform:translate(-50%,-50%) scaleX(0.800);transform-origin:center;">X41416</span>
<span class="t" style="left:505.2px;top:489.5px;font-size:7.8px;font-weight:400;color:#163f74;transform:translate(-50%,-50%) scaleX(0.800);transform-origin:center;">Y73050</span>
<div class="a " style="left:581.1px;top:475.0px;width:27.1px;height:19.8px;background:#48d1cc;"></div>
<span class="t" style="left:594.7px;top:481.0px;font-size:7.8px;font-weight:400;color:#126a68;transform:translate(-50%,-50%) scaleX(0.800);transform-origin:center;">X46001</span>
<span class="t" style="left:594.7px;top:489.0px;font-size:7.8px;font-weight:400;color:#126a68;transform:translate(-50%,-50%) scaleX(0.800);transform-origin:center;">Y81581</span>
<div class="a b3" style="left:517.8px;top:416.8px;width:24.0px;height:11.2px;background:#dcdcdc;"></div>
<span class="t" style="left:529.8px;top:422.9px;font-size:7.6px;font-weight:700;color:#111;transform:translate(-50%,-50%) scaleX(0.620);transform-origin:center;-webkit-text-stroke:0.3px;">Save</span>
<div class="a b3" style="left:517.8px;top:429.7px;width:24.0px;height:11.6px;background:#dcdcdc;"></div>
<span class="t" style="left:529.8px;top:436.0px;font-size:7.6px;font-weight:700;color:#111;transform:translate(-50%,-50%) scaleX(0.620);transform-origin:center;-webkit-text-stroke:0.3px;">goto</span>
<div class="a b3" style="left:556.3px;top:417.2px;width:24.0px;height:10.8px;background:#dcdcdc;"></div>
<span class="t" style="left:568.3px;top:423.1px;font-size:7.6px;font-weight:700;color:#111;transform:translate(-50%,-50%) scaleX(0.620);transform-origin:center;-webkit-text-stroke:0.3px;">Save</span>
<div class="a b3" style="left:556.3px;top:429.7px;width:24.0px;height:11.6px;background:#dcdcdc;"></div>
<span class="t" style="left:568.3px;top:436.0px;font-size:7.6px;font-weight:700;color:#111;transform:translate(-50%,-50%) scaleX(0.620);transform-origin:center;-webkit-text-stroke:0.3px;">goto</span>
<div class="a b3" style="left:519.0px;top:473.3px;width:24.0px;height:10.7px;background:#dcdcdc;"></div>
<span class="t" style="left:531.0px;top:479.1px;font-size:7.6px;font-weight:700;color:#111;transform:translate(-50%,-50%) scaleX(0.620);transform-origin:center;-webkit-text-stroke:0.3px;">Save</span>
<div class="a b3" style="left:519.0px;top:485.6px;width:24.0px;height:12.5px;background:#dcdcdc;"></div>
<span class="t" style="left:531.0px;top:492.4px;font-size:7.6px;font-weight:700;color:#111;transform:translate(-50%,-50%) scaleX(0.620);transform-origin:center;-webkit-text-stroke:0.3px;">goto</span>
<div class="a b3" style="left:557.0px;top:473.6px;width:23.3px;height:10.8px;background:#dcdcdc;"></div>
<span class="t" style="left:568.6px;top:479.5px;font-size:7.6px;font-weight:700;color:#111;transform:translate(-50%,-50%) scaleX(0.620);transform-origin:center;-webkit-text-stroke:0.3px;">Save</span>
<div class="a b3" style="left:557.0px;top:486.1px;width:23.3px;height:12.0px;background:#dcdcdc;"></div>
<span class="t" style="left:568.6px;top:492.6px;font-size:7.6px;font-weight:700;color:#111;transform:translate(-50%,-50%) scaleX(0.620);transform-origin:center;-webkit-text-stroke:0.3px;">goto</span>
<div class="a b3" style="left:497.6px;top:504.3px;width:103.7px;height:17.5px;background:#dcdcdc;"></div>
<span class="t" style="left:549.5px;top:513.5px;font-size:9.4px;font-weight:700;color:#111;transform:translate(-50%,-50%) scaleX(0.693);transform-origin:center;-webkit-text-stroke:0.3px;">Generate PCB data</span>
<svg class="a" style="left:453.8px;top:415.8px" width="36.2" height="36.2" viewBox="0 0 36.2 36.2">
<rect width="36.2" height="36.2" fill="#6a6cd6"/>
<rect x="8.3" y="0" width="5.6" height="4.2" fill="#fdfcc8"/>
<circle cx="31.4" cy="-2.1" r="10.9" fill="#fdfcc0" stroke="#241e48" stroke-width="0.9"/>
<circle cx="33" cy="36.8" r="12.4" fill="#fdfcc0" stroke="#241e48" stroke-width="0.9"/>
<circle cx="33" cy="36.8" r="10.6" fill="none" stroke="#3a2a50" stroke-width="0.6"/>
<circle cx="18.6" cy="19.2" r="9.9" fill="#fdfcc4" stroke="#3a3a7a" stroke-width="0.7"/>
<circle cx="17.6" cy="18.8" r="3.7" fill="none" stroke="#1a1a30" stroke-width="0.9"/>
<rect x="8.3" y="31.8" width="7.4" height="4.4" fill="#fdfcc0"/>
<rect width="8.3" height="36.2" fill="#4a2a32"/>
</svg>
<svg class="a" style="left:453.8px;top:461.2px" width="36.2" height="36" viewBox="0 0 36.2 36">
<rect width="36.2" height="36" fill="#a868bc"/>
<path d="M6 8Q3 18 8 30L20 33" fill="none" stroke="#8a5ac0" stroke-width="1.6" opacity=".55"/>
<circle cx="17.8" cy="17.7" r="10" fill="none" stroke="#5a2a6a" stroke-width="0.6" opacity=".7"/>
<circle cx="17.8" cy="17.7" r="6.9" fill="#6a2858" stroke="#f2e2f0" stroke-width="5.6"/>
</svg>
<svg class="a" style="left:609.3px;top:415.8px" width="36.7" height="36.8" viewBox="0 0 36.7 36.8">
<rect width="36.7" height="36.8" fill="#a66ac0"/>
<circle cx="19.4" cy="20.4" r="13" fill="none" stroke="#8a58b4" stroke-width="1.6" opacity=".7"/>
<rect x="0" y="17.6" width="9" height="0.9" fill="#d8b8e4"/><rect x="0" y="18.6" width="9" height="1" fill="#4a38a0"/>
<circle cx="18.6" cy="19" r="7.9" fill="#f8eef6" stroke="#efd2ea" stroke-width="4"/>
<path d="M18.6 14.1L22.6 16.5V21.5L18.6 23.9L14.6 21.5V16.5Z" fill="#6a2a5a"/>
</svg>
<svg class="a" style="left:609.8px;top:460.3px" width="36.2" height="36.9" viewBox="0 0 36.2 36.9">
<rect width="36.2" height="36.9" fill="#6a62d0"/>
<rect width="36.2" height="10.9" fill="#fad870"/><rect y="3.2" width="36.2" height="0.8" fill="#fce9a4"/><rect y="7" width="36.2" height="0.8" fill="#f6cf60"/>
<rect y="10.9" width="36.2" height="1.5" fill="#2a2048"/>
<rect y="12.4" width="6.2" height="2.2" fill="#2a2460"/><rect y="14.6" width="6.2" height="2" fill="#f4f4ff"/>
<circle cx="18.4" cy="18.6" r="3" fill="#fcf8c4" stroke="#3a2a60" stroke-width="0.6"/>
<rect x="24" y="21" width="3" height="3" fill="#5a50b8"/>
<text x="0.6" y="36.4" font-family="Liberation Sans, sans-serif" font-size="5.6" font-weight="700" fill="#fbfbff" textLength="35" lengthAdjust="spacingAndGlyphs">AGRM A/D 6</text>
</svg></body></html>
